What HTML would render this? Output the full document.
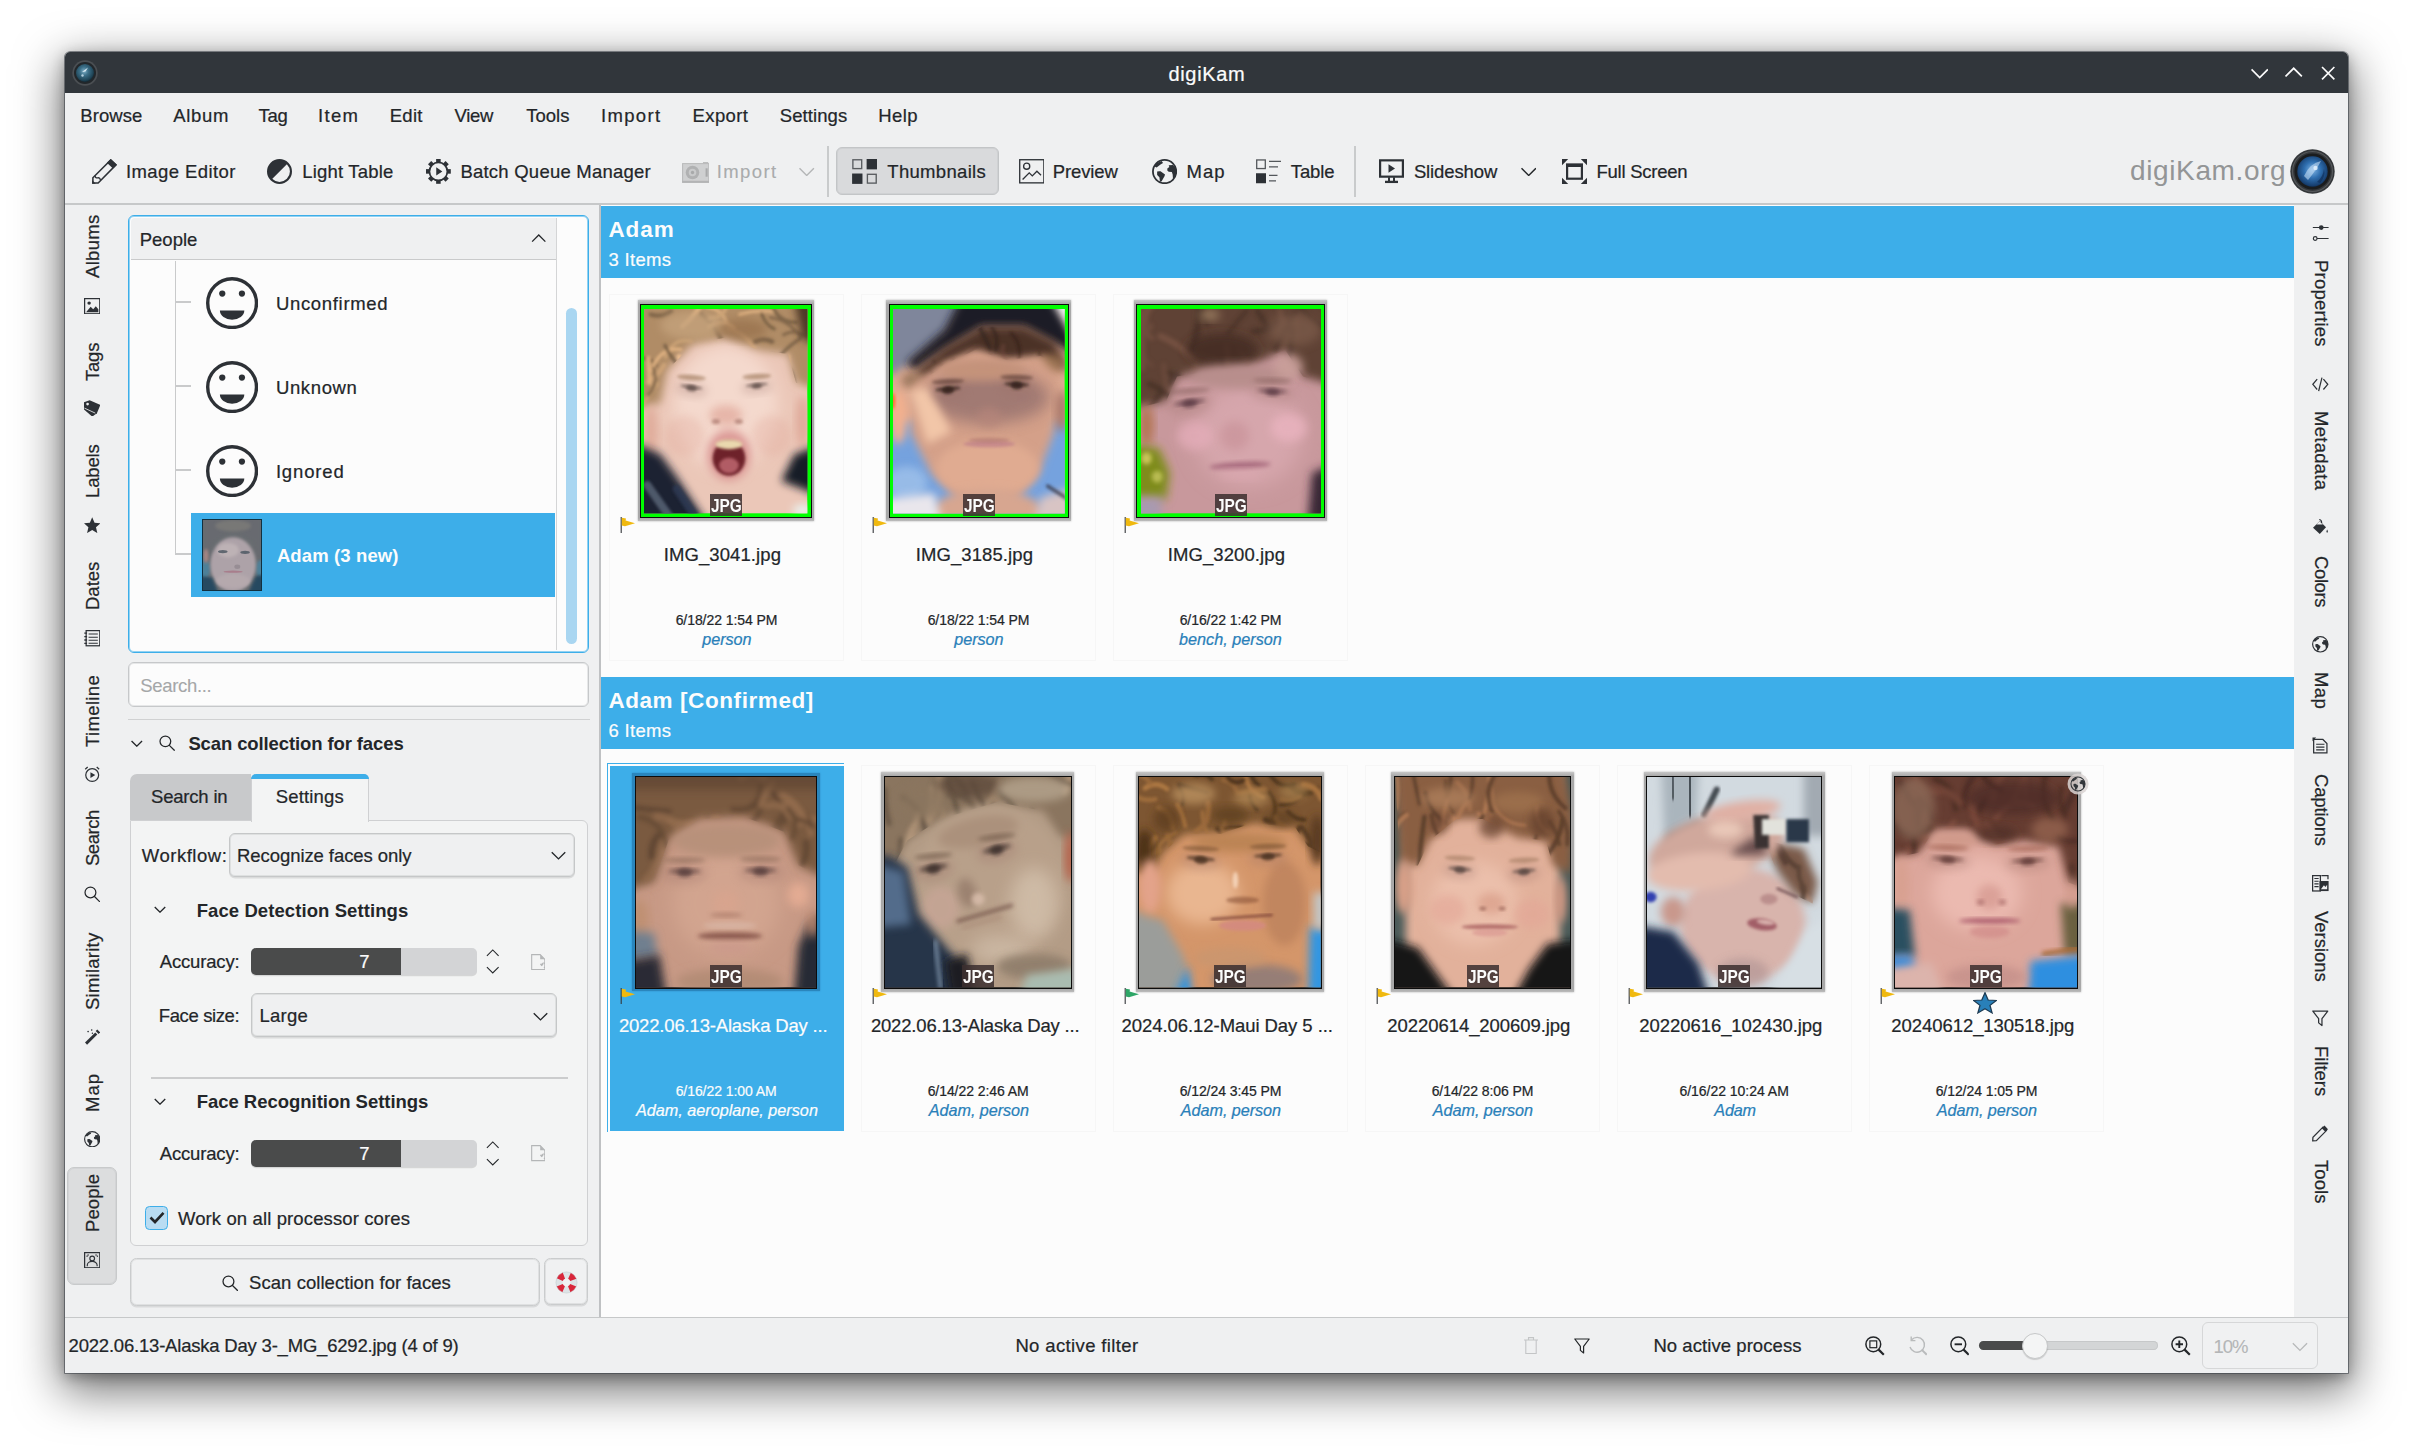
<!DOCTYPE html>
<html lang="en"><head><meta charset="utf-8"><title>digiKam</title>
<style>
html,body{margin:0;padding:0;}
body{width:2413px;height:1450px;background:#fff;position:relative;overflow:hidden;font-family:"Liberation Sans", "DejaVu Sans", sans-serif;color:#232629;}
div,svg,span{position:absolute;}
.g{left:0;top:0;width:0;height:0;}
#shadow{left:65px;top:52px;width:2283px;height:1321px;border-radius:5px 5px 0 0;box-shadow:0 0 0 0.8px rgba(60,66,72,.75), 0 14px 46px 4px rgba(0,0,0,.55), 0 4px 14px rgba(0,0,0,.30);}
.t{white-space:pre;line-height:1;display:block;-webkit-text-stroke:0.22px currentColor;}
.r{left:0;top:0;width:0;height:0;transform-origin:0 0;}
</style></head>
<body>
<div id="shadow"></div>
<div class="g" id="window">
<div class="win" style="left:65.00px;top:52.00px;width:2283.00px;height:1321.00px;background:#eff0f1;border-radius:5px 5px 0 0;"></div>
<div class="g" id="titlebar">
<div style="left:65.00px;top:52.00px;width:2283.00px;height:41.00px;background:#31363b;border-radius:5px 5px 0 0;"></div>
<svg style="left:72.00px;top:59.50px;" width="26" height="26" viewBox="0 0 26 26"><defs><radialGradient id="lens" cx=".45" cy=".4" r=".6"><stop offset="0" stop-color="#7fb0c8"/><stop offset=".4" stop-color="#3b6f88"/><stop offset=".85" stop-color="#1f4456"/><stop offset="1" stop-color="#122a36"/></radialGradient></defs><circle cx="13" cy="13" r="12.7" fill="#4b4f53"/><circle cx="13" cy="13" r="11" fill="#22272b"/><circle cx="13" cy="13" r="9" fill="url(#lens)"/><path d="M10 12 L16 7.5 L13.5 11.5 Z" fill="#e8f4fb" opacity=".9"/><circle cx="10.5" cy="15.5" r="1.2" fill="#cfe6f2" opacity=".8"/></svg>
<span class="t" style="left:1168.40px;top:64.00px;font-size:20px;color:#fcfcfc;letter-spacing:0.684px;">digiKam</span>
<svg style="left:2251.00px;top:68.30px;" width="17.4" height="10.9" viewBox="0 0 16 10"><path d="M0.5 1.3 L8 8.8 L15.5 1.3" fill="none" stroke="#fcfcfc" stroke-width="1.55"/></svg>
<svg style="left:2285.20px;top:67.00px;" width="17.4" height="10.9" viewBox="0 0 16 10"><path d="M0.5 8.7 L8 1.2 L15.5 8.7" fill="none" stroke="#fcfcfc" stroke-width="1.55"/></svg>
<svg style="left:2320.90px;top:65.90px;" width="14.4" height="14.4" viewBox="0 0 14 14"><path d="M1 1 L13 13 M13 1 L1 13" stroke="#fcfcfc" stroke-width="1.6"/></svg>
</div>
<div class="g" id="menubar">
<span class="t" style="left:80.20px;top:107.00px;font-size:18.5px;color:#232629;letter-spacing:0.100px;">Browse</span>
<span class="t" style="left:173.20px;top:107.00px;font-size:18.5px;color:#232629;letter-spacing:0.668px;">Album</span>
<span class="t" style="left:258.40px;top:107.00px;font-size:18.5px;color:#232629;letter-spacing:-0.219px;">Tag</span>
<span class="t" style="left:318.10px;top:107.00px;font-size:18.5px;color:#232629;letter-spacing:1.310px;">Item</span>
<span class="t" style="left:389.70px;top:107.00px;font-size:18.5px;color:#232629;letter-spacing:0.287px;">Edit</span>
<span class="t" style="left:454.60px;top:107.00px;font-size:18.5px;color:#232629;letter-spacing:-0.368px;">View</span>
<span class="t" style="left:526.20px;top:107.00px;font-size:18.5px;color:#232629;letter-spacing:0.016px;">Tools</span>
<span class="t" style="left:601.00px;top:107.00px;font-size:18.5px;color:#232629;letter-spacing:1.342px;">Import</span>
<span class="t" style="left:692.60px;top:107.00px;font-size:18.5px;color:#232629;letter-spacing:0.374px;">Export</span>
<span class="t" style="left:779.80px;top:107.00px;font-size:18.5px;color:#232629;letter-spacing:0.086px;">Settings</span>
<span class="t" style="left:878.30px;top:107.00px;font-size:18.5px;color:#232629;letter-spacing:0.414px;">Help</span>
</div>
<div class="g" id="toolbar">
<svg style="left:91.90px;top:159.20px;" width="25" height="24.8" viewBox="0 0 25 25"><path d="M0.8 24.2 L0.8 18.9 L18.8 0.95 L24.1 5.9 L6.1 24.2 Z" fill="none" stroke="#2d3136" stroke-width="1.55" stroke-linejoin="miter"/><path d="M14.9 3.8 L18.8 0 L25 5.8 L21 9.7 Z" fill="#2d3136"/><path d="M0 25 L0.2 21.3 L3.7 25 Z" fill="#2d3136"/><path d="M3 16.8 Q3 19.3 5.6 19 Q8.1 18.6 8.3 21.2" fill="none" stroke="#2d3136" stroke-width="1.4"/></svg>
<span class="t" style="left:125.90px;top:163.00px;font-size:18.5px;color:#232629;letter-spacing:0.425px;">Image Editor</span>
<svg style="left:267.00px;top:159.00px;" width="25" height="25" viewBox="0 0 24 24"><circle cx="12" cy="12" r="11" fill="none" stroke="#2d3136" stroke-width="2"/><path d="M4.2 19.8 A11 11 0 0 1 19.8 4.2 Z" fill="#2d3136"/></svg>
<span class="t" style="left:302.30px;top:163.00px;font-size:18.5px;color:#232629;letter-spacing:0.191px;">Light Table</span>
<svg style="left:426.05px;top:159.05px;" width="24.8" height="24.8" viewBox="0 0 24 24"><rect x="9.8" y="0" width="4.4" height="3.4" fill="#2d3136" transform="rotate(0 12 12)"/><rect x="9.8" y="0" width="4.4" height="3.4" fill="#2d3136" transform="rotate(45 12 12)"/><rect x="9.8" y="0" width="4.4" height="3.4" fill="#2d3136" transform="rotate(90 12 12)"/><rect x="9.8" y="0" width="4.4" height="3.4" fill="#2d3136" transform="rotate(135 12 12)"/><rect x="9.8" y="0" width="4.4" height="3.4" fill="#2d3136" transform="rotate(180 12 12)"/><rect x="9.8" y="0" width="4.4" height="3.4" fill="#2d3136" transform="rotate(225 12 12)"/><rect x="9.8" y="0" width="4.4" height="3.4" fill="#2d3136" transform="rotate(270 12 12)"/><rect x="9.8" y="0" width="4.4" height="3.4" fill="#2d3136" transform="rotate(315 12 12)"/><circle cx="12" cy="12" r="8.7" fill="none" stroke="#2d3136" stroke-width="1.7"/><path d="M9.9 8.1 L15.8 12 L9.9 15.9 Z" fill="#2d3136"/></svg>
<span class="t" style="left:460.40px;top:163.00px;font-size:18.5px;color:#232629;letter-spacing:0.234px;">Batch Queue Manager</span>
<svg style="left:681.70px;top:161.00px;" width="27.3" height="23" viewBox="0 0 26 22"><rect x="0.5" y="2.5" width="25" height="17" fill="#cfd0d1" stroke="#b9babb" stroke-width="1"/><rect x="0" y="19" width="26" height="2" fill="#b3b4b5"/><circle cx="10" cy="11" r="6.5" fill="#b0b1b2"/><circle cx="10" cy="11" r="3.6" fill="#c9cacb"/><circle cx="10" cy="11" r="1.6" fill="#a8a9aa"/><rect x="22.5" y="7" width="2" height="8" fill="#a9aaab"/><rect x="20" y="1" width="5" height="1.5" fill="#b9babb"/></svg>
<span class="t" style="left:716.70px;top:163.00px;font-size:18.5px;color:#a9abac;letter-spacing:1.402px;-webkit-text-stroke-width:0.1px;">Import</span>
<svg style="left:799.40px;top:166.90px;" width="15.4" height="9.6" viewBox="0 0 16 10"><path d="M0.5 1.3 L8 8.8 L15.5 1.3" fill="none" stroke="#b4b6b7" stroke-width="1.5"/></svg>
<div style="left:827.40px;top:146.20px;width:1.50px;height:50.50px;background:#c9cbcc;"></div>
<div style="left:836.30px;top:146.90px;width:162.80px;height:47.80px;background:#d9dadc;border:1.5px solid #c3c5c7;border-radius:6px;box-sizing:border-box;box-shadow:inset 0 0 0 1px rgba(195,197,199,.45);"></div>
<svg style="left:851.80px;top:159.10px;" width="25.1" height="24.9" viewBox="0 0 24 24"><rect x="0.75" y="0.75" width="8.5" height="8.5" fill="none" stroke="#2d3136" stroke-width="1.3" opacity=".75"/><rect x="14" y="0" width="10" height="10" fill="#2d3136"/><rect x="0" y="14" width="10" height="10" fill="#2d3136"/><rect x="14.75" y="14.75" width="8.5" height="8.5" fill="none" stroke="#2d3136" stroke-width="1.3" opacity=".75"/></svg>
<span class="t" style="left:887.30px;top:163.00px;font-size:18.5px;color:#232629;letter-spacing:0.314px;">Thumbnails</span>
<svg style="left:1018.50px;top:159.30px;" width="25.6" height="24.6" viewBox="0 0 25 24"><rect x="0.7" y="0.7" width="23.6" height="22.6" fill="none" stroke="#2d3136" stroke-width="1.3"/><circle cx="7.5" cy="7" r="3" fill="none" stroke="#2d3136" stroke-width="1.3"/><path d="M3.5 20 L10 13.5 L13 16.5 L17.5 12 L21.5 15.8" fill="none" stroke="#2d3136" stroke-width="1.3"/></svg>
<span class="t" style="left:1052.80px;top:163.00px;font-size:18.5px;color:#232629;letter-spacing:-0.123px;">Preview</span>
<svg style="left:1152.00px;top:159.00px;" width="25.2" height="25.2" viewBox="0 0 24 24"><circle cx="12" cy="12" r="11.1" fill="none" stroke="#2d3136" stroke-width="1.7"/><path d="M1.9 6.6 L4.6 3.9 L9.2 2 L10.5 3.9 L8.1 5.2 L4.4 8.2 L2.5 7.1 Z" fill="#2d3136"/><path d="M4.9 12 Q6.5 11.3 8.1 11.7 L12.4 14.7 L11.9 16.5 L9.2 21.1 L7.6 21.6 L7.05 17.4 L4.9 15.2 Z" fill="#2d3136"/><path d="M15.9 6.05 L20 5.8 L21.6 7.7 L23 8.2 Q23.6 12 22.5 16 L20 19.2 L19.7 14.7 L18.9 12.5 L15.9 12.2 L14.6 10.9 L14.6 9 L16.5 7.7 Z" fill="#2d3136"/></svg>
<span class="t" style="left:1186.60px;top:163.00px;font-size:18.5px;color:#232629;letter-spacing:0.950px;">Map</span>
<svg style="left:1256.00px;top:159.30px;" width="25" height="24.5" viewBox="0 0 25 24"><rect x="0.7" y="0.7" width="8.6" height="8.6" fill="none" stroke="#2d3136" stroke-width="1.3" opacity=".8"/><rect x="0" y="14" width="10" height="10" fill="#2d3136"/><path d="M13 2.2 H25 M13 7.7 H22 M13 16.2 H21.5 M13 21.7 H20" stroke="#2d3136" stroke-width="1.3" opacity=".8"/></svg>
<span class="t" style="left:1290.80px;top:163.00px;font-size:18.5px;color:#232629;letter-spacing:-0.109px;">Table</span>
<div style="left:1354.20px;top:146.20px;width:1.50px;height:50.50px;background:#c9cbcc;"></div>
<svg style="left:1379.00px;top:159.30px;" width="25" height="24.5" viewBox="0 0 25 24"><rect x="1.1" y="1.1" width="22.8" height="16.3" fill="none" stroke="#2d3136" stroke-width="2.2"/><path d="M9.5 5 L16 9.2 L9.5 13.5 Z" fill="#2d3136"/><path d="M10 18 V22 M15 18 V22" stroke="#2d3136" stroke-width="2"/><rect x="6" y="21.5" width="13" height="2.3" fill="#2d3136"/></svg>
<span class="t" style="left:1413.90px;top:163.00px;font-size:18.5px;color:#232629;letter-spacing:-0.121px;">Slideshow</span>
<svg style="left:1520.90px;top:166.90px;" width="15.4" height="9.6" viewBox="0 0 16 10"><path d="M0.5 1.3 L8 8.8 L15.5 1.3" fill="none" stroke="#232629" stroke-width="1.5"/></svg>
<svg style="left:1562.00px;top:159.00px;" width="25" height="25" viewBox="0 0 25 25"><path d="M0 0 H6.2 L0 6.2 Z M25 0 V6.2 L18.8 0 Z M0 25 V18.8 L6.2 25 Z M25 25 H18.8 L25 18.8 Z" fill="#2d3136"/><rect x="5.1" y="5.7" width="14.8" height="14" fill="none" stroke="#2d3136" stroke-width="2.2"/><rect x="4" y="4.6" width="17" height="3.4" fill="#2d3136"/></svg>
<span class="t" style="left:1596.40px;top:163.00px;font-size:18.5px;color:#232629;letter-spacing:-0.238px;">Full Screen</span>
<span class="t" style="left:2130.10px;top:157.00px;font-size:28px;color:#939596;letter-spacing:0.607px;-webkit-text-stroke-width:0px;">digiKam.org</span>
<svg style="left:2290.00px;top:148.80px;" width="45" height="45" viewBox="0 0 45 45"><defs><radialGradient id="lens2" cx=".5" cy=".45" r=".6"><stop offset="0" stop-color="#7fb4e4"/><stop offset=".45" stop-color="#2f6fb0"/><stop offset=".85" stop-color="#173f70"/><stop offset="1" stop-color="#0c2444"/></radialGradient></defs><circle cx="22.5" cy="22.5" r="22.2" fill="#34373a"/><circle cx="22.5" cy="22.5" r="20" fill="none" stroke="#55585b" stroke-width="1.2"/><circle cx="22.5" cy="22.5" r="18" fill="#1a1c1e"/><circle cx="22.5" cy="22.5" r="15.2" fill="url(#lens2)"/><path d="M14 27 Q20 14 31 12 Q27 20 18 31 Z" fill="#cfe6fa" opacity=".55"/><circle cx="25.5" cy="19" r="2.2" fill="#eaf5ff" opacity=".8"/><path d="M27 33 Q33 28 34 20 Q36 27 30 34 Z" fill="#0c2a55" opacity=".6"/></svg>
<div style="left:65.00px;top:202.80px;width:2283.00px;height:2.40px;background:#c6c8c9;"></div>
</div>
<div class="g" id="leftbar">
<div style="left:67.40px;top:1167.40px;width:49.60px;height:117.20px;background:#dcddde;border:1.5px solid #c8cacb;border-radius:7px;box-sizing:border-box;box-shadow:inset 0 0 0 1px rgba(200,202,203,.45);"></div>
<div class="r" style="left:99.70px;top:278.40px;transform:rotate(-90deg);"><span class="t" style="left:0.00px;top:-15.66px;font-size:18.5px;color:#232629;letter-spacing:0.312px;">Albums</span></div>
<svg style="left:84.00px;top:298.00px;" width="16.4" height="16.4" viewBox="0 0 16 16"><rect x="0.6" y="0.6" width="14.8" height="14.8" fill="none" stroke="#2d3136" stroke-width="1.2"/><circle cx="5" cy="5" r="1.7" fill="#2d3136"/><path d="M2 14 L6.5 8.5 L9 11 L11.5 8 L14 11 V14 Z" fill="#2d3136"/></svg>
<div class="r" style="left:99.70px;top:381.20px;transform:rotate(-90deg);"><span class="t" style="left:0.00px;top:-15.66px;font-size:18.5px;color:#232629;letter-spacing:-0.209px;">Tags</span></div>
<svg style="left:84.00px;top:400.00px;" width="16.4" height="16.4" viewBox="0 0 16 16"><path d="M0 2.3 L5.5 0.2 L16 4.8 L12.6 13 L8 16.2 L0 9.3 Z" fill="#2d3136"/><path d="M0.4 7.9 L11 12.8" stroke="#eff0f1" stroke-width="0.8"/><circle cx="3.5" cy="4" r="1.3" fill="#eff0f1"/></svg>
<div class="r" style="left:99.70px;top:496.60px;transform:rotate(-90deg);"><span class="t" style="left:-1.00px;top:-15.66px;font-size:18.5px;color:#232629;letter-spacing:-0.133px;">Labels</span></div>
<svg style="left:84.00px;top:517.00px;" width="16.4" height="16.4" viewBox="0 0 16 16"><path d="M8 0.3 L10.3 5.7 L16 6.2 L11.7 10 L13 15.7 L8 12.7 L3 15.7 L4.3 10 L0 6.2 L5.7 5.7 Z" fill="#2d3136"/></svg>
<div class="r" style="left:99.70px;top:609.40px;transform:rotate(-90deg);"><span class="t" style="left:-1.00px;top:-15.66px;font-size:18.5px;color:#232629;letter-spacing:0.006px;">Dates</span></div>
<svg style="left:84.00px;top:630.30px;" width="16.4" height="16.4" viewBox="0 0 16 16"><rect x="2.1" y="0.6" width="13.3" height="14.8" fill="none" stroke="#2d3136" stroke-width="1.2"/><path d="M4.5 4 H13.5 M4.5 7 H13.5 M4.5 10 H13.5 M4.5 13 H13.5" stroke="#2d3136" stroke-width="1"/><path d="M0.3 3 H3 M0.3 6.4 H3 M0.3 9.8 H3 M0.3 13 H3" stroke="#2d3136" stroke-width="1.3"/></svg>
<div class="r" style="left:99.70px;top:746.50px;transform:rotate(-90deg);"><span class="t" style="left:0.00px;top:-15.66px;font-size:18.5px;color:#232629;letter-spacing:0.367px;">Timeline</span></div>
<svg style="left:84.00px;top:766.20px;" width="16.4" height="16.4" viewBox="0 0 16 16"><circle cx="8" cy="8.8" r="6.3" fill="none" stroke="#2d3136" stroke-width="1.2"/><path d="M6.3 6 L11 8.8 L6.3 11.6 Z" fill="#2d3136"/><path d="M1.2 3.2 L3.6 1 M14.8 3.2 L12.4 1" stroke="#2d3136" stroke-width="1.2"/></svg>
<div class="r" style="left:99.70px;top:865.50px;transform:rotate(-90deg);"><span class="t" style="left:0.00px;top:-15.66px;font-size:18.5px;color:#232629;letter-spacing:-0.466px;">Search</span></div>
<svg style="left:84.00px;top:886.00px;" width="16.4" height="16.4" viewBox="0 0 16 16"><circle cx="6.3" cy="6.3" r="5.3" fill="none" stroke="#232629" stroke-width="1.2"/><path d="M10 10 L15.5 15.5" stroke="#232629" stroke-width="1.2"/></svg>
<div class="r" style="left:99.70px;top:1010.40px;transform:rotate(-90deg);"><span class="t" style="left:0.00px;top:-15.66px;font-size:18.5px;color:#232629;letter-spacing:0.247px;">Similarity</span></div>
<svg style="left:84.00px;top:1029.30px;" width="16.4" height="16.4" viewBox="0 0 16 16"><path d="M1 14.5 L11 4.5 L13 6.5 L3 16.5 Z" fill="#2d3136" transform="translate(0,-1.2)"/><path d="M12.2 1.2 L15 4" stroke="#2d3136" stroke-width="2.2"/><circle cx="4" cy="2.5" r="0.8" fill="#2d3136"/><circle cx="7.5" cy="1" r="0.8" fill="#2d3136"/><circle cx="8.2" cy="4.2" r="0.7" fill="#2d3136"/></svg>
<div class="r" style="left:99.70px;top:1110.80px;transform:rotate(-90deg);"><span class="t" style="left:-1.00px;top:-15.66px;font-size:18.5px;color:#232629;letter-spacing:1.050px;">Map</span></div>
<svg style="left:84.00px;top:1131.00px;" width="16.4" height="16.4" viewBox="0 0 24 24"><circle cx="12" cy="12" r="11.1" fill="none" stroke="#2d3136" stroke-width="1.7"/><path d="M1.9 6.6 L4.6 3.9 L9.2 2 L10.5 3.9 L8.1 5.2 L4.4 8.2 L2.5 7.1 Z" fill="#2d3136"/><path d="M4.9 12 Q6.5 11.3 8.1 11.7 L12.4 14.7 L11.9 16.5 L9.2 21.1 L7.6 21.6 L7.05 17.4 L4.9 15.2 Z" fill="#2d3136"/><path d="M15.9 6.05 L20 5.8 L21.6 7.7 L23 8.2 Q23.6 12 22.5 16 L20 19.2 L19.7 14.7 L18.9 12.5 L15.9 12.2 L14.6 10.9 L14.6 9 L16.5 7.7 Z" fill="#2d3136"/></svg>
<div class="r" style="left:99.70px;top:1231.30px;transform:rotate(-90deg);"><span class="t" style="left:-1.00px;top:-15.66px;font-size:18.5px;color:#232629;letter-spacing:0.097px;">People</span></div>
<svg style="left:84.00px;top:1252.00px;" width="16.4" height="16.4" viewBox="0 0 16 16"><rect x="0.6" y="0.6" width="14.8" height="14.8" fill="none" stroke="#2d3136" stroke-width="1.2"/><circle cx="8" cy="6.3" r="2.3" fill="none" stroke="#2d3136" stroke-width="1.1"/><path d="M3.2 14 V12.8 A4.8 3.6 0 0 1 12.8 12.8 V14" fill="none" stroke="#2d3136" stroke-width="1.1"/><path d="M3 5 V3 H5 M11 3 H13 V5" fill="none" stroke="#2d3136" stroke-width="1" stroke-dasharray="1.5 0.8"/></svg>
</div>
<div class="g" id="leftpanel">
<div style="left:128.30px;top:214.70px;width:461.20px;height:437.90px;background:#fcfcfc;border:1.6px solid #3daee9;border-radius:6px;box-sizing:border-box;box-shadow:inset 0 0 0 1px rgba(61,174,233,.55);"></div>
<div style="left:131.00px;top:217.60px;width:425.60px;height:41.60px;background:#eff0f1;border-bottom:1.5px solid #c9cacb;border-top-left-radius:4px;box-sizing:content-box;"></div>
<div style="left:556.20px;top:217.60px;width:1.30px;height:432.30px;background:#d4d5d6;"></div>
<span class="t" style="left:139.70px;top:231.00px;font-size:18.5px;color:#232629;letter-spacing:0.017px;">People</span>
<svg style="left:531.30px;top:234.00px;" width="15.5" height="8.8" viewBox="0 0 16 10"><path d="M0.5 8.7 L8 1.2 L15.5 8.7" fill="none" stroke="#232629" stroke-width="1.5"/></svg>
<div style="left:174.70px;top:261.00px;width:1.30px;height:293.50px;background:#c9cacb;"></div>
<div style="left:175.00px;top:301.40px;width:16.00px;height:1.30px;background:#c9cacb;"></div>
<div style="left:175.00px;top:385.40px;width:16.00px;height:1.30px;background:#c9cacb;"></div>
<div style="left:175.00px;top:469.40px;width:16.00px;height:1.30px;background:#c9cacb;"></div>
<div style="left:175.00px;top:553.40px;width:16.40px;height:1.30px;background:#c9cacb;"></div>
<svg style="left:206.00px;top:277.00px;" width="52.2" height="52.2" viewBox="0 0 52 52"><circle cx="26" cy="26" r="24.3" fill="none" stroke="#2d3136" stroke-width="3.4"/><circle cx="16.2" cy="16.5" r="3.1" fill="#2d3136"/><circle cx="35.8" cy="16.5" r="3.1" fill="#2d3136"/><path d="M13.8 33.5 H38.2 A12.2 9 0 0 1 13.8 33.5 Z" fill="#2d3136"/></svg>
<span class="t" style="left:275.90px;top:295.00px;font-size:18.5px;color:#232629;letter-spacing:0.681px;">Unconfirmed</span>
<svg style="left:206.00px;top:361.00px;" width="52.2" height="52.2" viewBox="0 0 52 52"><circle cx="26" cy="26" r="24.3" fill="none" stroke="#2d3136" stroke-width="3.4"/><circle cx="16.2" cy="16.5" r="3.1" fill="#2d3136"/><circle cx="35.8" cy="16.5" r="3.1" fill="#2d3136"/><path d="M13.8 33.5 H38.2 A12.2 9 0 0 1 13.8 33.5 Z" fill="#2d3136"/></svg>
<span class="t" style="left:275.90px;top:379.00px;font-size:18.5px;color:#232629;letter-spacing:0.644px;">Unknown</span>
<svg style="left:206.00px;top:445.00px;" width="52.2" height="52.2" viewBox="0 0 52 52"><circle cx="26" cy="26" r="24.3" fill="none" stroke="#2d3136" stroke-width="3.4"/><circle cx="16.2" cy="16.5" r="3.1" fill="#2d3136"/><circle cx="35.8" cy="16.5" r="3.1" fill="#2d3136"/><path d="M13.8 33.5 H38.2 A12.2 9 0 0 1 13.8 33.5 Z" fill="#2d3136"/></svg>
<span class="t" style="left:275.90px;top:463.00px;font-size:18.5px;color:#232629;letter-spacing:0.841px;">Ignored</span>
<div style="left:191.10px;top:512.90px;width:364.00px;height:84.00px;background:#3daee9;"></div>
<div style="left:202.00px;top:519.00px;width:60.10px;height:71.90px;border:1.8px solid #12303f;box-sizing:border-box;overflow:hidden;background:#31546a;"><svg width="60.1" height="71.8" viewBox="0 0 60.1 71.8" style="left:0;top:0"><defs><filter id="fb1" x="-30%" y="-30%" width="160%" height="160%"><feGaussianBlur stdDeviation="1.6"/></filter><filter id="fs1" x="-30%" y="-30%" width="160%" height="160%"><feGaussianBlur stdDeviation="0.7"/></filter><filter id="fx1" x="-40%" y="-40%" width="180%" height="180%"><feGaussianBlur stdDeviation="3.0"/></filter><clipPath id="fc1"><rect width="60.1" height="71.8"/></clipPath></defs><g clip-path="url(#fc1)"><rect width="60.1" height="71.8" fill="#686c70"/><ellipse cx="1.2" cy="48.8" rx="6.0" ry="10.1" fill="#4e8098" filter="url(#fb1)"/><ellipse cx="58.9" cy="48.8" rx="6.0" ry="10.1" fill="#4e8098" filter="url(#fb1)"/><polygon points="1.2,-7.2 58.9,-7.2 58.9,39.5 52.9,39.5 50.5,21.5 36.1,14.4 27.0,12.2 18.0,17.9 9.6,23.7 8.4,39.5 1.2,43.1" fill="#676b70" filter="url(#fb1)"/><ellipse cx="30.1" cy="5.7" rx="18.0" ry="5.7" fill="#7d7c78" opacity="0.8" filter="url(#fb1)"/><ellipse cx="30.1" cy="44.5" rx="22.8" ry="27.3" fill="#ada2a8" filter="url(#fb1)"/><ellipse cx="25.2" cy="30.2" rx="10.8" ry="7.2" fill="#bdb2b5" filter="url(#fb1)"/><ellipse cx="30.1" cy="61.0" rx="16.8" ry="7.2" fill="#b5a9ad" filter="url(#fb1)"/><polygon points="-6.0,56.0 9.0,57.4 18.0,79.0 -6.0,79.0" fill="#284a60" filter="url(#fb1)"/><polygon points="66.1,53.8 52.9,56.0 42.1,79.0 66.1,79.0" fill="#284a60" filter="url(#fb1)"/><ellipse cx="3.0" cy="35.9" rx="2.4" ry="7.2" fill="#b08a88" opacity="0.9" filter="url(#fb1)"/><ellipse cx="19.8" cy="31.6" rx="4.8" ry="1.6" fill="#4a5560" opacity="0.8" filter="url(#fs1)"/><ellipse cx="42.1" cy="32.3" rx="4.8" ry="1.6" fill="#4a5560" opacity="0.8" filter="url(#fs1)"/><ellipse cx="34.3" cy="46.7" rx="3.0" ry="2.2" fill="#8a8088" opacity="0.6" filter="url(#fs1)"/><ellipse cx="30.1" cy="51.7" rx="9.6" ry="1.1" fill="#a87888" opacity="0.85" filter="url(#fs1)"/></g></svg></div>
<span class="t" style="left:276.90px;top:547.00px;font-size:18.5px;color:#fcfcfc;letter-spacing:0.118px;font-weight:bold;-webkit-text-stroke-width:0;">Adam (3 new)</span>
<div style="left:566.10px;top:307.60px;width:11.40px;height:336.40px;background:#a9d6f1;border-radius:6px;"></div>
<div style="left:128.30px;top:662.40px;width:461.20px;height:45.00px;background:#fcfcfc;border:1.5px solid #c6c8ca;border-radius:6px;box-sizing:border-box;box-shadow:inset 0 0 0 1px rgba(198,200,202,.4);"></div>
<span class="t" style="left:140.30px;top:677.00px;font-size:18.5px;color:#a5a7a8;letter-spacing:-0.325px;-webkit-text-stroke-width:0.1px;">Search...</span>
<div style="left:128.00px;top:718.80px;width:462.00px;height:1.40px;background:#d0d1d2;"></div>
<svg style="left:131.40px;top:739.50px;" width="11.6" height="7" viewBox="0 0 16 10"><path d="M0.5 1.3 L8 8.8 L15.5 1.3" fill="none" stroke="#232629" stroke-width="1.9"/></svg>
<svg style="left:159.00px;top:735.00px;" width="16.2" height="16.2" viewBox="0 0 16 16"><circle cx="6.3" cy="6.3" r="5.3" fill="none" stroke="#232629" stroke-width="1.25"/><path d="M10 10 L15.5 15.5" stroke="#232629" stroke-width="1.25"/></svg>
<span class="t" style="left:188.40px;top:735.00px;font-size:18.5px;color:#232629;letter-spacing:-0.111px;font-weight:bold;-webkit-text-stroke-width:0;">Scan collection for faces</span>
<div style="left:130.00px;top:774.30px;width:120.80px;height:46.20px;background:#c8c9cb;border-top-left-radius:7px;"></div>
<div style="left:130.00px;top:820.00px;width:457.80px;height:426.10px;background:#f3f4f4;border:1.4px solid #cfd0d2;border-radius:0 6px 6px 6px;box-sizing:border-box;"></div>
<div style="left:250.50px;top:774.00px;width:118.40px;height:48.00px;background:#f3f4f4;border:1.4px solid #cfd0d2;border-bottom:none;border-radius:6px 6px 0 0;box-sizing:border-box;"></div>
<div style="left:250.50px;top:774.00px;width:118.40px;height:4.80px;background:#3daee9;border-radius:6px 6px 0 0;"></div>
<span class="t" style="left:151.00px;top:788.00px;font-size:18.5px;color:#232629;letter-spacing:-0.196px;">Search in</span>
<span class="t" style="left:275.80px;top:788.00px;font-size:18.5px;color:#232629;letter-spacing:0.143px;">Settings</span>
<span class="t" style="left:141.80px;top:847.00px;font-size:18.5px;color:#232629;letter-spacing:0.522px;">Workflow:</span>
<div style="left:228.80px;top:832.80px;width:346.00px;height:44.70px;background:#eff0f1;border:1.5px solid #c5c7c8;border-radius:6px;box-sizing:border-box;box-shadow:0 1.5px 0 rgba(0,0,0,.10), inset 0 0 0 1px rgba(197,199,200,.4);"></div>
<span class="t" style="left:237.10px;top:847.00px;font-size:18.5px;color:#232629;letter-spacing:-0.079px;">Recognize faces only</span>
<svg style="left:551.00px;top:851.40px;" width="15" height="9" viewBox="0 0 16 10"><path d="M0.5 1.3 L8 8.8 L15.5 1.3" fill="none" stroke="#232629" stroke-width="1.5"/></svg>
<svg style="left:153.60px;top:905.90px;" width="12" height="7" viewBox="0 0 16 10"><path d="M0.5 1.3 L8 8.8 L15.5 1.3" fill="none" stroke="#232629" stroke-width="1.9"/></svg>
<span class="t" style="left:196.70px;top:902.00px;font-size:18.5px;color:#232629;letter-spacing:0.085px;font-weight:bold;-webkit-text-stroke-width:0;">Face Detection Settings</span>
<span class="t" style="left:159.80px;top:953.00px;font-size:18.5px;color:#232629;letter-spacing:-0.172px;">Accuracy:</span>
<div style="left:251.20px;top:948.00px;width:225.60px;height:26.90px;background:#d3d4d6;border-radius:5px;box-shadow:0 1.2px 0 rgba(0,0,0,.12);overflow:hidden;"><div style="left:0;top:0;width:149.6px;height:26.9px;background:#4a4b4b;"></div></div>
<span class="t" style="left:359.30px;top:953.00px;font-size:18.5px;color:#fcfcfc;">7</span>
<svg style="left:484.70px;top:949.00px;" width="15.5" height="7.8" viewBox="0 0 16 10"><path d="M0.5 8.7 L8 1.2 L15.5 8.7" fill="none" stroke="#232629" stroke-width="1.4"/></svg>
<svg style="left:484.70px;top:966.10px;" width="15.5" height="7.8" viewBox="0 0 16 10"><path d="M0.5 1.3 L8 8.8 L15.5 1.3" fill="none" stroke="#232629" stroke-width="1.4"/></svg>
<svg style="left:530.90px;top:953.60px;" width="14.5" height="16.2" viewBox="0 0 14.2 16"><path d="M0.6 0.6 H9 L13.6 5.2 V15.4 H0.6 Z" fill="none" stroke="#b4b6b7" stroke-width="1.1"/><path d="M9 0.6 V5.2 H13.6 Z" fill="#b4b6b7"/><path d="M12.6 13.4 A2.2 2.2 0 1 0 10.4 11.2 M9.2 9.8 L10.4 11.4 L12 10.2" fill="none" stroke="#b4b6b7" stroke-width="1"/></svg>
<span class="t" style="left:158.80px;top:1007.00px;font-size:18.5px;color:#232629;letter-spacing:-0.385px;">Face size:</span>
<div style="left:251.20px;top:993.30px;width:305.40px;height:44.20px;background:#eff0f1;border:1.5px solid #c5c7c8;border-radius:6px;box-sizing:border-box;box-shadow:0 1.5px 0 rgba(0,0,0,.10), inset 0 0 0 1px rgba(197,199,200,.4);"></div>
<span class="t" style="left:259.50px;top:1007.00px;font-size:18.5px;color:#232629;letter-spacing:0.243px;">Large</span>
<svg style="left:532.80px;top:1012.00px;" width="15" height="9" viewBox="0 0 16 10"><path d="M0.5 1.3 L8 8.8 L15.5 1.3" fill="none" stroke="#232629" stroke-width="1.5"/></svg>
<div style="left:151.10px;top:1077.20px;width:417.00px;height:1.50px;background:#cbcccd;"></div>
<svg style="left:153.60px;top:1097.60px;" width="12" height="7" viewBox="0 0 16 10"><path d="M0.5 1.3 L8 8.8 L15.5 1.3" fill="none" stroke="#232629" stroke-width="1.9"/></svg>
<span class="t" style="left:196.70px;top:1093.00px;font-size:18.5px;color:#232629;letter-spacing:-0.026px;font-weight:bold;-webkit-text-stroke-width:0;">Face Recognition Settings</span>
<span class="t" style="left:159.80px;top:1145.00px;font-size:18.5px;color:#232629;letter-spacing:-0.172px;">Accuracy:</span>
<div style="left:251.20px;top:1139.80px;width:225.60px;height:26.90px;background:#d3d4d6;border-radius:5px;box-shadow:0 1.2px 0 rgba(0,0,0,.12);overflow:hidden;"><div style="left:0;top:0;width:149.6px;height:26.9px;background:#4a4b4b;"></div></div>
<span class="t" style="left:359.30px;top:1145.00px;font-size:18.5px;color:#fcfcfc;">7</span>
<svg style="left:484.70px;top:1140.80px;" width="15.5" height="7.8" viewBox="0 0 16 10"><path d="M0.5 8.7 L8 1.2 L15.5 8.7" fill="none" stroke="#232629" stroke-width="1.4"/></svg>
<svg style="left:484.70px;top:1157.90px;" width="15.5" height="7.8" viewBox="0 0 16 10"><path d="M0.5 1.3 L8 8.8 L15.5 1.3" fill="none" stroke="#232629" stroke-width="1.4"/></svg>
<svg style="left:530.90px;top:1145.40px;" width="14.5" height="16.2" viewBox="0 0 14.2 16"><path d="M0.6 0.6 H9 L13.6 5.2 V15.4 H0.6 Z" fill="none" stroke="#b4b6b7" stroke-width="1.1"/><path d="M9 0.6 V5.2 H13.6 Z" fill="#b4b6b7"/><path d="M12.6 13.4 A2.2 2.2 0 1 0 10.4 11.2 M9.2 9.8 L10.4 11.4 L12 10.2" fill="none" stroke="#b4b6b7" stroke-width="1"/></svg>
<div style="left:144.70px;top:1206.30px;width:23.60px;height:23.30px;background:#b9dcf2;border:1.6px solid #3daee9;border-radius:4.5px;box-sizing:border-box;"></div>
<svg style="left:148.50px;top:1211.00px;" width="16" height="13" viewBox="0 0 16 13"><path d="M1.5 6.5 L6 11 L14.5 1.8" fill="none" stroke="#232629" stroke-width="2.6"/></svg>
<span class="t" style="left:177.90px;top:1210.00px;font-size:18.5px;color:#232629;letter-spacing:0.120px;">Work on all processor cores</span>
<div style="left:129.70px;top:1258.40px;width:410.60px;height:47.40px;background:#f0f1f2;border:1.8px solid #cacccd;border-radius:6.5px;box-sizing:border-box;box-shadow:0 1.4px 0 rgba(0,0,0,.09), inset 0 0 0 1px rgba(202,204,205,.45);"></div>
<svg style="left:221.80px;top:1274.80px;" width="16.4" height="16.4" viewBox="0 0 16 16"><circle cx="6.3" cy="6.3" r="5.3" fill="none" stroke="#232629" stroke-width="1.25"/><path d="M10 10 L15.5 15.5" stroke="#232629" stroke-width="1.25"/></svg>
<span class="t" style="left:249.10px;top:1274.00px;font-size:18.5px;color:#232629;letter-spacing:0.051px;">Scan collection for faces</span>
<div style="left:543.80px;top:1258.40px;width:44.70px;height:46.60px;background:#f0f1f2;border:1.8px solid #cacccd;border-radius:6.5px;box-sizing:border-box;box-shadow:0 1.4px 0 rgba(0,0,0,.09), inset 0 0 0 1px rgba(202,204,205,.45);"></div>
<svg style="left:554.60px;top:1270.70px;" width="23" height="23" viewBox="0 0 23 23"><circle cx="11.5" cy="11.5" r="7.3" fill="none" stroke="#dde3e6" stroke-width="6.6"/><circle cx="11.5" cy="11.5" r="7.3" fill="none" stroke="#d9263a" stroke-width="6.6" stroke-dasharray="5.733 5.733" stroke-dashoffset="8.6"/><circle cx="11.5" cy="11.5" r="10.6" fill="none" stroke="#b9c2c6" stroke-width=".6" opacity=".7"/></svg>
</div>
<div style="left:598.80px;top:205.20px;width:2.00px;height:1112.20px;background:#bfc1c3;"></div>
<div class="g" id="mainview">
<div style="left:600.80px;top:205.20px;width:1692.90px;height:1112.20px;background:#fcfcfc;"></div>
<div style="left:600.80px;top:205.80px;width:1692.90px;height:72.20px;background:#3daee9;"></div>
<span class="t" style="left:608.40px;top:219.00px;font-size:22.5px;color:#fcfcfc;letter-spacing:0.931px;font-weight:bold;-webkit-text-stroke-width:0;">Adam</span>
<span class="t" style="left:608.40px;top:251.00px;font-size:18.5px;color:#fcfcfc;letter-spacing:0.332px;">3 Items</span>
<div style="left:600.80px;top:676.80px;width:1692.90px;height:72.20px;background:#3daee9;"></div>
<span class="t" style="left:608.40px;top:690.00px;font-size:22.5px;color:#fcfcfc;letter-spacing:0.576px;font-weight:bold;-webkit-text-stroke-width:0;">Adam [Confirmed]</span>
<span class="t" style="left:608.40px;top:722.00px;font-size:18.5px;color:#fcfcfc;letter-spacing:0.332px;">6 Items</span>
<div style="left:609.00px;top:293.90px;width:235.40px;height:367.40px;border:1.2px solid #f6f6f6;box-sizing:border-box;"></div>
<div style="left:637.60px;top:300.40px;width:176.80px;height:220.70px;background:linear-gradient(#c6c6c6,#a8a8a8 4px,#a8a8a8 calc(100% - 3px),#bcbcbc);box-shadow:0 0 2px rgba(0,0,0,.3);"></div>
<div style="left:639.80px;top:303.80px;width:172.40px;height:214.50px;background:#0c0c0c;"></div>
<div style="left:640.80px;top:304.80px;width:170.40px;height:212.50px;background:#00ff00;"></div>
<div style="left:644.30px;top:309.30px;width:163.50px;height:204.60px;overflow:hidden;"><svg width="163.5" height="204.6" viewBox="0 0 163.5 204.6" style="left:0;top:0"><defs><filter id="fb2" x="-30%" y="-30%" width="160%" height="160%"><feGaussianBlur stdDeviation="4"/></filter><filter id="fs2" x="-30%" y="-30%" width="160%" height="160%"><feGaussianBlur stdDeviation="1.8"/></filter><filter id="fx2" x="-40%" y="-40%" width="180%" height="180%"><feGaussianBlur stdDeviation="7.6"/></filter><clipPath id="fc2"><rect width="163.5" height="204.6"/></clipPath></defs><g clip-path="url(#fc2)"><rect width="163.5" height="204.6" fill="#ebc7b8"/><ellipse cx="81.8" cy="98.2" rx="52.3" ry="61.4" fill="#f4d9cd" filter="url(#fx2)"/><polygon points="-16.4,-20.5 179.9,-20.5 179.9,81.8 152.1,73.7 143.9,45.0 114.5,40.9 81.8,28.6 49.1,34.8 22.9,61.4 16.4,94.1 -16.4,102.3" fill="#b08c66" filter="url(#fb2)"/><clipPath id="fh2_11"><polygon points="-16.4,-20.5 179.9,-20.5 179.9,81.8 152.1,73.7 143.9,45.0 114.5,40.9 81.8,28.6 49.1,34.8 22.9,61.4 16.4,94.1 -16.4,102.3"/></clipPath><g clip-path="url(#fh2_11)"><g filter="url(#fs2)" fill="none" stroke-linecap="round" opacity="0.75"><path d="M86.3 53.5 Q73.5 55.1 61.6 61.0" stroke="#e8b986" stroke-width="2.9"/><path d="M90.7 57.7 Q87.2 70.2 76.7 71.1" stroke="#68533c" stroke-width="4.3"/><path d="M131.3 3.0 Q113.2 0.1 95.5 5.5" stroke="#efbe8a" stroke-width="2.9"/><path d="M-7.2 51.8 Q3.8 45.0 12.1 56.3" stroke="#67523b" stroke-width="3.5"/><path d="M72.9 68.0 Q68.3 85.9 71.2 104.4" stroke="#e8b886" stroke-width="3.5"/><path d="M62.1 101.8 Q45.5 108.2 28.8 102.3" stroke="#715a41" stroke-width="3.0"/><path d="M56.2 -2.9 Q48.7 9.2 38.3 17.3" stroke="#f8c58f" stroke-width="4.6"/><path d="M124.8 -13.3 Q130.4 13.3 152.3 13.4" stroke="#6c563e" stroke-width="3.4"/><path d="M20.1 55.8 Q13.8 67.1 3.8 73.0" stroke="#d5a97b" stroke-width="4.6"/><path d="M117.6 4.3 Q121.0 15.9 130.3 19.9" stroke="#634f39" stroke-width="2.9"/><path d="M78.6 34.8 Q89.4 49.5 104.3 56.7" stroke="#d7ab7c" stroke-width="2.8"/><path d="M56.9 4.9 Q73.0 17.1 80.7 38.7" stroke="#735c43" stroke-width="4.4"/><path d="M47.5 32.3 Q29.4 27.5 21.4 48.4" stroke="#d5aa7b" stroke-width="3.0"/><path d="M36.6 67.3 Q48.4 74.4 47.8 90.8" stroke="#634f39" stroke-width="3.8"/><path d="M34.8 47.0 Q40.0 61.4 44.7 76.0" stroke="#fdc993" stroke-width="3.8"/><path d="M126.3 8.6 Q144.9 11.0 157.0 28.8" stroke="#745c43" stroke-width="2.9"/><path d="M106.4 83.3 Q119.2 99.2 135.4 109.1" stroke="#fac690" stroke-width="3.4"/><path d="M27.2 2.4 Q17.4 9.0 6.7 5.5" stroke="#715a41" stroke-width="4.3"/><path d="M84.4 19.9 Q101.0 22.9 110.6 40.1" stroke="#d4a87b" stroke-width="3.7"/><path d="M128.3 46.0 Q149.8 52.1 150.5 79.7" stroke="#66513b" stroke-width="3.1"/><path d="M62.9 -1.5 Q76.5 -1.2 82.8 13.9" stroke="#ebbb88" stroke-width="3.3"/><path d="M152.8 83.7 Q153.3 105.4 138.5 116.9" stroke="#6e5840" stroke-width="2.6"/><path d="M13.5 75.0 Q-0.2 90.2 -7.7 111.2" stroke="#d2a779" stroke-width="3.6"/><path d="M128.1 32.6 Q119.4 28.5 110.8 32.6" stroke="#6e573f" stroke-width="4.5"/><path d="M134.4 58.8 Q117.4 66.8 106.6 85.2" stroke="#e1b382" stroke-width="4.5"/><path d="M155.8 29.8 Q140.4 39.3 129.1 55.6" stroke="#6e5840" stroke-width="3.3"/><path d="M81.2 57.8 Q93.1 73.0 109.3 66.8" stroke="#ffcb93" stroke-width="4.1"/><path d="M66.6 60.1 Q71.5 77.8 60.4 90.3" stroke="#745c43" stroke-width="4.1"/><path d="M4.3 48.7 Q4.9 61.5 5.5 74.3" stroke="#f1c08b" stroke-width="3.8"/><path d="M139.5 25.7 Q150.7 19.6 161.5 26.7" stroke="#715941" stroke-width="2.9"/><path d="M145.0 46.4 Q143.6 68.6 151.2 88.7" stroke="#e0b281" stroke-width="2.9"/><path d="M86.9 76.8 Q69.8 79.7 54.0 88.1" stroke="#6a543d" stroke-width="3.2"/><path d="M36.9 40.5 Q16.4 37.6 7.7 61.0" stroke="#f2c08c" stroke-width="3.1"/><path d="M21.1 36.5 Q26.1 47.7 34.2 55.7" stroke="#6b553e" stroke-width="3.6"/><path d="M64.1 85.0 Q52.1 97.6 39.0 86.7" stroke="#d4a97b" stroke-width="4.4"/><path d="M9.2 59.0 Q15.1 74.8 4.3 86.0" stroke="#735b42" stroke-width="2.8"/><path d="M83.3 -4.1 Q78.2 10.6 65.5 9.1" stroke="#d7ab7c" stroke-width="3.9"/><path d="M80.6 46.4 Q68.7 61.6 65.4 82.5" stroke="#775e45" stroke-width="2.9"/><path d="M64.9 17.7 Q77.9 10.1 90.5 18.8" stroke="#f2c08c" stroke-width="3.1"/><path d="M57.4 53.5 Q59.0 71.5 55.6 89.2" stroke="#725b42" stroke-width="4.2"/></g></g><ellipse cx="49.1" cy="16.4" rx="32.7" ry="14.3" fill="#c4a27c" opacity="0.8" filter="url(#fb2)"/><ellipse cx="98.1" cy="20.5" rx="24.5" ry="10.2" fill="#96704c" opacity="0.7" filter="url(#fb2)"/><polygon points="147.2,-20.5 179.9,-20.5 179.9,36.8 158.6,30.7" fill="#4d3826" filter="url(#fb2)"/><ellipse cx="6.5" cy="122.8" rx="7.4" ry="26.6" fill="#e0ad9c" filter="url(#fb2)"/><ellipse cx="158.6" cy="112.5" rx="6.5" ry="26.6" fill="#dfa999" filter="url(#fb2)"/><polygon points="-16.4,130.9 16.4,145.3 32.7,167.8 70.3,225.1 -16.4,225.1" fill="#1b2230" filter="url(#fb2)"/><line x1="3.3" y1="176.0" x2="26.2" y2="208.7" stroke="#5c6779" stroke-width="8.2" stroke-linecap="round" opacity="0.8" filter="url(#fs2)"/><line x1="32.7" y1="180.0" x2="49.1" y2="204.6" stroke="#2e3b55" stroke-width="8.2" stroke-linecap="round" opacity="0.8" filter="url(#fs2)"/><polygon points="179.9,135.0 150.4,145.3 137.3,171.9 179.9,188.2" fill="#181d28" filter="url(#fb2)"/><ellipse cx="158.6" cy="201.5" rx="9.8" ry="6.1" fill="#e9f3f0" filter="url(#fb2)"/><ellipse cx="40.9" cy="126.9" rx="19.6" ry="20.5" fill="#e2ab9d" opacity="0.35" filter="url(#fb2)"/><ellipse cx="127.5" cy="126.9" rx="19.6" ry="20.5" fill="#e2ab9d" opacity="0.35" filter="url(#fb2)"/><ellipse cx="47.4" cy="80.4" rx="15.9" ry="7.5" fill="#9a7068" opacity="0.25" filter="url(#fb2)" transform="rotate(8 47.4 80.4)"/><ellipse cx="47.4" cy="78.0" rx="11.2" ry="1.8" fill="#5a4844" opacity="0.675" filter="url(#fs2)" transform="rotate(8 47.4 78.0)"/><ellipse cx="47.4" cy="79.2" rx="5.3" ry="3.1" fill="#5a4844" opacity="0.75" filter="url(#fs2)" transform="rotate(8 47.4 79.2)"/><ellipse cx="47.4" cy="68.5" rx="14.3" ry="2.7" fill="#9a7454" opacity="0.6" filter="url(#fs2)" transform="rotate(4.0 47.4 68.5)"/><ellipse cx="112.8" cy="78.4" rx="15.9" ry="6.6" fill="#9a7068" opacity="0.25" filter="url(#fb2)" transform="rotate(-6 112.8 78.4)"/><ellipse cx="112.8" cy="75.9" rx="11.2" ry="1.6" fill="#5a4844" opacity="0.675" filter="url(#fs2)" transform="rotate(-6 112.8 75.9)"/><ellipse cx="112.8" cy="77.1" rx="5.3" ry="2.7" fill="#5a4844" opacity="0.75" filter="url(#fs2)" transform="rotate(-6 112.8 77.1)"/><ellipse cx="112.8" cy="67.5" rx="14.3" ry="2.7" fill="#9a7454" opacity="0.6" filter="url(#fs2)" transform="rotate(-3.0 112.8 67.5)"/><line x1="68.7" y1="75.7" x2="94.8" y2="75.7" stroke="#8a6456" stroke-width="2.0" stroke-linecap="round" opacity="0.5" filter="url(#fs2)"/><ellipse cx="81.8" cy="106.4" rx="16.4" ry="10.2" fill="#e3ada0" opacity="0.8" filter="url(#fb2)"/><ellipse cx="71.9" cy="112.5" rx="4.1" ry="2.5" fill="#a8766c" opacity="0.7" filter="url(#fs2)"/><ellipse cx="94.8" cy="112.5" rx="4.1" ry="2.5" fill="#a8766c" opacity="0.7" filter="url(#fs2)"/><ellipse cx="85.0" cy="146.3" rx="22.1" ry="25.6" fill="#dc9a96" filter="url(#fb2)"/><ellipse cx="85.0" cy="149.4" rx="16.4" ry="17.4" fill="#6e2229" filter="url(#fs2)"/><ellipse cx="85.0" cy="156.5" rx="9.8" ry="7.8" fill="#b9646c" opacity="0.9" filter="url(#fs2)"/><ellipse cx="85.0" cy="135.4" rx="13.4" ry="4.9" fill="#ead8ae" filter="url(#fs2)"/></g></svg></div>
<div style="left:710.00px;top:493.90px;width:32.00px;height:21.90px;background:rgba(60,48,48,.86);"></div>
<span class="t" style="left:711.00px;top:497.00px;font-size:18px;color:#fcfcfc;font-weight:bold;-webkit-text-stroke-width:0;transform:scaleX(0.8567);transform-origin:0 0;">JPG</span>
<svg style="left:619.90px;top:517.10px;" width="16" height="16" viewBox="0 0 16 16"><path d="M1.2 0 V16" stroke="#33373b" stroke-width="1.1"/><path d="M1.8 0.8 L6 1.6 L5.6 3.4 L15 6.2 L5 9.2 L1.8 8.6 Z" fill="#f0b90f"/></svg>
<span class="t" style="left:663.70px;top:546.00px;font-size:18.5px;color:#232629;letter-spacing:0.098px;">IMG_3041.jpg</span>
<span class="t" style="left:675.65px;top:613.00px;font-size:14px;color:#232629;letter-spacing:-0.070px;">6/18/22 1:54 PM</span>
<span class="t" style="left:702.20px;top:631.00px;font-size:16.2px;color:#2980b9;letter-spacing:-0.018px;font-style:italic;">person</span>
<div style="left:861.00px;top:293.90px;width:235.40px;height:367.40px;border:1.2px solid #f6f6f6;box-sizing:border-box;"></div>
<div style="left:886.30px;top:300.40px;width:185.10px;height:220.70px;background:linear-gradient(#c6c6c6,#a8a8a8 4px,#a8a8a8 calc(100% - 3px),#bcbcbc);box-shadow:0 0 2px rgba(0,0,0,.3);"></div>
<div style="left:888.50px;top:303.80px;width:180.70px;height:214.50px;background:#0c0c0c;"></div>
<div style="left:889.50px;top:304.80px;width:178.70px;height:212.50px;background:#00ff00;"></div>
<div style="left:893.00px;top:309.30px;width:171.80px;height:204.60px;overflow:hidden;"><svg width="171.8" height="204.6" viewBox="0 0 171.8 204.6" style="left:0;top:0"><defs><filter id="fb3" x="-30%" y="-30%" width="160%" height="160%"><feGaussianBlur stdDeviation="4"/></filter><filter id="fs3" x="-30%" y="-30%" width="160%" height="160%"><feGaussianBlur stdDeviation="1.8"/></filter><filter id="fx3" x="-40%" y="-40%" width="180%" height="180%"><feGaussianBlur stdDeviation="7.6"/></filter><clipPath id="fc3"><rect width="171.8" height="204.6"/></clipPath></defs><g clip-path="url(#fc3)"><rect width="171.8" height="204.6" fill="#dcaa92"/><rect x="-17.2" y="112.5" width="206.2" height="122.8" fill="#74a2de" filter="url(#fb3)"/><ellipse cx="13.7" cy="173.9" rx="20.6" ry="16.4" fill="#a6c6ec" opacity="0.7" filter="url(#fb3)"/><polygon points="-17.2,-20.5 85.9,-20.5 51.5,28.6 17.2,55.2 -17.2,73.7" fill="#7f869b" filter="url(#fb3)"/><polygon points="72.2,-20.5 158.1,-20.5 189.0,49.1 161.5,34.8 130.6,18.4 89.3,18.4 51.5,40.9 20.6,61.4 13.7,53.2 51.5,20.5" fill="#1d1c28" filter="url(#fb3)"/><polygon points="151.2,-20.5 189.0,-20.5 189.0,40.9" fill="#eef2f8" filter="url(#fb3)"/><polygon points="24.1,61.4 51.5,38.9 89.3,17.4 130.6,17.4 161.5,32.7 175.2,61.4 147.7,47.1 113.4,51.1 82.5,40.9 51.5,55.2 27.5,73.7" fill="#4b3128" filter="url(#fb3)"/><clipPath id="fh3_12"><polygon points="24.1,61.4 51.5,38.9 89.3,17.4 130.6,17.4 161.5,32.7 175.2,61.4 147.7,47.1 113.4,51.1 82.5,40.9 51.5,55.2 27.5,73.7"/></clipPath><g clip-path="url(#fh3_12)"><g filter="url(#fs3)" fill="none" stroke-linecap="round" opacity="0.6"><path d="M97.1 46.3 Q95.5 55.1 91.3 62.4" stroke="#593a2f" stroke-width="3.0"/><path d="M146.4 43.8 Q149.7 58.0 141.1 68.7" stroke="#301f19" stroke-width="3.3"/><path d="M36.6 61.1 Q46.2 72.4 59.4 75.7" stroke="#5a3b30" stroke-width="3.1"/><path d="M77.7 61.7 Q83.8 64.9 90.0 67.8" stroke="#32201a" stroke-width="2.6"/><path d="M162.0 63.9 Q171.6 67.9 177.8 77.4" stroke="#5b3b30" stroke-width="3.7"/><path d="M41.5 52.5 Q48.8 55.3 55.0 60.7" stroke="#31201a" stroke-width="3.3"/><path d="M110.3 36.9 Q107.5 45.8 113.9 51.6" stroke="#674337" stroke-width="4.4"/><path d="M118.2 24.1 Q129.0 34.6 126.0 50.8" stroke="#301f19" stroke-width="2.9"/><path d="M84.8 37.2 Q73.9 41.8 70.6 55.1" stroke="#593a2f" stroke-width="3.3"/><path d="M99.1 18.9 Q106.6 28.6 102.4 40.9" stroke="#31201a" stroke-width="3.5"/><path d="M42.7 52.3 Q49.6 58.5 58.0 60.8" stroke="#5f3e33" stroke-width="2.5"/><path d="M86.8 18.8 Q92.2 29.0 97.0 39.5" stroke="#32211b" stroke-width="4.4"/><path d="M46.3 60.7 Q44.0 71.4 51.3 78.1" stroke="#674337" stroke-width="2.4"/><path d="M60.6 51.7 Q69.3 58.1 66.8 69.8" stroke="#291b16" stroke-width="3.7"/></g></g><ellipse cx="158.1" cy="55.2" rx="13.7" ry="10.2" fill="#9a7250" opacity="0.8" filter="url(#fb3)"/><ellipse cx="20.6" cy="71.6" rx="12.0" ry="8.2" fill="#8a6a50" opacity="0.8" filter="url(#fb3)"/><polygon points="20.6,73.7 51.5,55.2 82.5,43.0 113.4,53.2 147.7,49.1 164.9,69.6 161.5,122.8 146.0,163.7 120.3,194.4 68.7,194.4 37.8,163.7 17.2,122.8" fill="#d4a089" filter="url(#fb3)"/><ellipse cx="94.5" cy="88.0" rx="61.8" ry="26.6" fill="#9f7872" opacity="0.95" filter="url(#fx3)"/><ellipse cx="89.3" cy="61.4" rx="42.9" ry="10.2" fill="#c4937a" filter="url(#fb3)"/><polygon points="17.2,81.8 34.4,77.7 58.4,122.8 34.4,135.0" fill="#f2c6a8" filter="url(#fb3)"/><ellipse cx="94.5" cy="159.6" rx="51.5" ry="28.6" fill="#e0ab91" filter="url(#fb3)"/><ellipse cx="5.2" cy="108.4" rx="8.6" ry="26.6" fill="#f3b08e" filter="url(#fb3)"/><ellipse cx="0.0" cy="92.1" rx="2.1" ry="8.2" fill="#ff6a2c" filter="url(#fs3)"/><ellipse cx="168.4" cy="102.3" rx="6.0" ry="20.5" fill="#a8786a" filter="url(#fb3)"/><ellipse cx="94.5" cy="204.6" rx="56.7" ry="24.6" fill="#d7a690" filter="url(#fb3)"/><polygon points="-17.2,190.3 41.2,184.1 51.5,225.1 -17.2,225.1" fill="#e9e6ec" filter="url(#fb3)"/><polygon points="147.7,188.2 189.0,176.0 189.0,225.1 137.4,225.1" fill="#d8c4c4" filter="url(#fb3)"/><line x1="154.6" y1="177.0" x2="175.2" y2="190.3" stroke="#3a3a4a" stroke-width="3.4" stroke-linecap="round" opacity="0.8" filter="url(#fs3)"/><ellipse cx="55.0" cy="82.5" rx="18.0" ry="9.4" fill="#9a7068" opacity="0.25" filter="url(#fb3)" transform="rotate(-5 55.0 82.5)"/><ellipse cx="55.0" cy="80.0" rx="12.6" ry="2.3" fill="#35221f" opacity="0.765" filter="url(#fs3)" transform="rotate(-5 55.0 80.0)"/><ellipse cx="55.0" cy="81.2" rx="6.0" ry="3.9" fill="#35221f" opacity="0.85" filter="url(#fs3)" transform="rotate(-5 55.0 81.2)"/><ellipse cx="55.0" cy="72.6" rx="16.2" ry="2.7" fill="#5a3a30" opacity="0.6" filter="url(#fs3)" transform="rotate(-2.5 55.0 72.6)"/><ellipse cx="123.7" cy="77.7" rx="18.0" ry="9.4" fill="#9a7068" opacity="0.25" filter="url(#fb3)" transform="rotate(3 123.7 77.7)"/><ellipse cx="123.7" cy="75.3" rx="12.6" ry="2.3" fill="#35221f" opacity="0.765" filter="url(#fs3)" transform="rotate(3 123.7 75.3)"/><ellipse cx="123.7" cy="76.5" rx="6.0" ry="3.9" fill="#35221f" opacity="0.85" filter="url(#fs3)" transform="rotate(3 123.7 76.5)"/><ellipse cx="123.7" cy="68.5" rx="16.2" ry="2.7" fill="#5a3a30" opacity="0.6" filter="url(#fs3)" transform="rotate(1.5 123.7 68.5)"/><ellipse cx="96.2" cy="108.4" rx="12.0" ry="10.2" fill="#b5857a" opacity="0.7" filter="url(#fb3)"/><ellipse cx="96.2" cy="135.0" rx="25.8" ry="3.3" fill="#c4868a" opacity="0.9" filter="url(#fs3)"/><ellipse cx="96.2" cy="130.9" rx="20.6" ry="2.5" fill="#a8706a" opacity="0.5" filter="url(#fs3)"/></g></svg></div>
<div style="left:962.85px;top:493.90px;width:32.00px;height:21.90px;background:rgba(60,48,48,.86);"></div>
<span class="t" style="left:963.85px;top:497.00px;font-size:18px;color:#fcfcfc;font-weight:bold;-webkit-text-stroke-width:0;transform:scaleX(0.8567);transform-origin:0 0;">JPG</span>
<svg style="left:871.90px;top:517.10px;" width="16" height="16" viewBox="0 0 16 16"><path d="M1.2 0 V16" stroke="#33373b" stroke-width="1.1"/><path d="M1.8 0.8 L6 1.6 L5.6 3.4 L15 6.2 L5 9.2 L1.8 8.6 Z" fill="#f0b90f"/></svg>
<span class="t" style="left:915.70px;top:546.00px;font-size:18.5px;color:#232629;letter-spacing:0.098px;">IMG_3185.jpg</span>
<span class="t" style="left:927.65px;top:613.00px;font-size:14px;color:#232629;letter-spacing:-0.070px;">6/18/22 1:54 PM</span>
<span class="t" style="left:954.20px;top:631.00px;font-size:16.2px;color:#2980b9;letter-spacing:-0.018px;font-style:italic;">person</span>
<div style="left:1113.00px;top:293.90px;width:235.40px;height:367.40px;border:1.2px solid #f6f6f6;box-sizing:border-box;"></div>
<div style="left:1133.90px;top:300.40px;width:193.40px;height:220.70px;background:linear-gradient(#c6c6c6,#a8a8a8 4px,#a8a8a8 calc(100% - 3px),#bcbcbc);box-shadow:0 0 2px rgba(0,0,0,.3);"></div>
<div style="left:1136.10px;top:303.80px;width:189.00px;height:214.50px;background:#0c0c0c;"></div>
<div style="left:1137.10px;top:304.80px;width:187.00px;height:212.50px;background:#00ff00;"></div>
<div style="left:1140.60px;top:309.30px;width:180.10px;height:204.60px;overflow:hidden;"><svg width="180.1" height="204.6" viewBox="0 0 180.1 204.6" style="left:0;top:0"><defs><filter id="fb4" x="-30%" y="-30%" width="160%" height="160%"><feGaussianBlur stdDeviation="5"/></filter><filter id="fs4" x="-30%" y="-30%" width="160%" height="160%"><feGaussianBlur stdDeviation="2.2"/></filter><filter id="fx4" x="-40%" y="-40%" width="180%" height="180%"><feGaussianBlur stdDeviation="9.5"/></filter><clipPath id="fc4"><rect width="180.1" height="204.6"/></clipPath></defs><g clip-path="url(#fc4)"><rect width="180.1" height="204.6" fill="#c8989c"/><ellipse cx="108.1" cy="126.9" rx="54.0" ry="51.1" fill="#d6a6ac" filter="url(#fx4)"/><polygon points="-18.0,-20.5 198.1,-20.5 198.1,77.7 162.1,67.5 144.1,40.9 108.1,57.3 72.0,61.4 36.0,67.5 25.2,92.1 -18.0,102.3" fill="#5f4236" filter="url(#fb4)"/><clipPath id="fh4_13"><polygon points="-18.0,-20.5 198.1,-20.5 198.1,77.7 162.1,67.5 144.1,40.9 108.1,57.3 72.0,61.4 36.0,67.5 25.2,92.1 -18.0,102.3"/></clipPath><g clip-path="url(#fh4_13)"><g filter="url(#fs4)" fill="none" stroke-linecap="round" opacity="0.55"><path d="M55.7 48.9 Q54.7 74.5 37.6 91.3" stroke="#755142" stroke-width="4.3"/><path d="M27.5 63.4 Q43.9 70.2 53.6 86.8" stroke="#37261f" stroke-width="5.2"/><path d="M138.5 56.6 Q147.9 70.6 163.2 67.9" stroke="#745042" stroke-width="6.4"/><path d="M157.6 63.8 Q152.3 90.0 132.8 105.2" stroke="#3e2b23" stroke-width="6.5"/><path d="M90.1 60.1 Q89.4 77.5 85.3 94.4" stroke="#795445" stroke-width="4.8"/><path d="M36.1 64.8 Q19.7 82.4 6.1 102.9" stroke="#3d2a22" stroke-width="6.2"/><path d="M22.6 55.7 Q23.9 69.3 25.9 82.8" stroke="#755143" stroke-width="4.6"/><path d="M79.9 49.4 Q87.4 60.6 85.6 74.5" stroke="#3a2821" stroke-width="4.5"/><path d="M19.3 27.1 Q36.6 34.3 50.7 47.9" stroke="#885f4d" stroke-width="6.1"/><path d="M152.5 -10.3 Q165.2 8.3 183.5 19.1" stroke="#3e2b23" stroke-width="4.3"/><path d="M90.8 75.4 Q67.8 78.3 58.2 102.2" stroke="#755143" stroke-width="5.0"/><path d="M145.1 5.9 Q132.3 22.4 113.0 22.1" stroke="#3d2a22" stroke-width="5.8"/><path d="M98.2 40.0 Q110.5 58.1 111.1 81.0" stroke="#795445" stroke-width="4.3"/><path d="M116.6 2.0 Q122.4 12.2 129.8 20.9" stroke="#3c2a22" stroke-width="5.5"/><path d="M2.9 33.5 Q-1.1 48.7 11.1 56.5" stroke="#704e40" stroke-width="4.2"/><path d="M56.8 15.7 Q56.5 28.1 51.8 39.4" stroke="#3a2821" stroke-width="6.5"/><path d="M0.8 8.9 Q1.9 34.2 1.2 59.6" stroke="#7d5747" stroke-width="6.0"/><path d="M53.5 -21.2 Q61.7 3.3 53.3 27.7" stroke="#3d2a23" stroke-width="6.0"/><path d="M156.0 10.5 Q157.7 27.6 149.9 42.4" stroke="#765243" stroke-width="4.4"/><path d="M60.5 -8.0 Q61.5 4.4 65.9 15.8" stroke="#3d2b23" stroke-width="3.8"/><path d="M138.6 0.3 Q145.1 19.2 140.2 38.7" stroke="#795444" stroke-width="5.2"/><path d="M8.1 74.8 Q28.4 82.4 41.2 101.9" stroke="#37261f" stroke-width="5.0"/><path d="M0.9 -3.4 Q-5.4 17.7 11.2 29.7" stroke="#865d4c" stroke-width="3.9"/><path d="M105.8 1.6 Q95.6 12.5 87.0 24.9" stroke="#3f2c24" stroke-width="4.2"/><path d="M10.0 17.1 Q2.4 27.5 -8.2 33.6" stroke="#7c5646" stroke-width="4.9"/><path d="M153.7 3.9 Q143.9 21.5 135.1 39.8" stroke="#402c24" stroke-width="6.8"/><path d="M85.3 36.2 Q91.5 62.8 73.4 81.1" stroke="#875e4c" stroke-width="4.2"/><path d="M97.3 67.7 Q100.5 83.5 95.0 98.5" stroke="#402c24" stroke-width="4.1"/><path d="M15.2 -7.6 Q3.8 -0.8 3.5 13.8" stroke="#825a4a" stroke-width="7.0"/><path d="M151.7 21.1 Q152.3 45.7 139.7 65.7" stroke="#3d2a22" stroke-width="6.3"/></g></g><ellipse cx="81.0" cy="40.9" rx="36.0" ry="16.4" fill="#432c24" opacity="0.8" filter="url(#fb4)"/><ellipse cx="68.4" cy="6.1" rx="10.8" ry="5.1" fill="#a88c6c" opacity="0.8" filter="url(#fb4)"/><ellipse cx="153.1" cy="20.5" rx="27.0" ry="16.4" fill="#7a5a48" opacity="0.8" filter="url(#fb4)"/><ellipse cx="99.1" cy="67.5" rx="50.4" ry="12.3" fill="#b88e8c" filter="url(#fb4)"/><ellipse cx="147.7" cy="57.3" rx="14.4" ry="12.3" fill="#c9a09a" opacity="0.8" filter="url(#fb4)"/><ellipse cx="5.4" cy="116.6" rx="7.2" ry="20.5" fill="#b37452" filter="url(#fb4)"/><polygon points="-18.0,135.0 18.0,139.1 28.8,163.7 25.2,190.3 -18.0,190.3" fill="#7f8c1f" filter="url(#fb4)"/><ellipse cx="5.4" cy="149.4" rx="5.4" ry="6.1" fill="#cfca60" opacity="0.9" filter="url(#fs4)"/><ellipse cx="16.2" cy="167.8" rx="5.4" ry="6.1" fill="#c8c860" opacity="0.8" filter="url(#fs4)"/><polygon points="-18.0,188.2 21.6,188.2 18.0,225.1 -18.0,225.1" fill="#a89ab0" filter="url(#fb4)"/><polygon points="198.1,153.4 171.1,163.7 165.7,225.1 198.1,225.1" fill="#392636" filter="url(#fb4)"/><ellipse cx="147.7" cy="118.7" rx="18.0" ry="14.3" fill="#eab4c0" opacity="0.8" filter="url(#fb4)"/><ellipse cx="54.0" cy="126.9" rx="18.0" ry="14.3" fill="#e6aebb" opacity="0.7" filter="url(#fb4)"/><ellipse cx="48.6" cy="95.8" rx="23.0" ry="9.4" fill="#9a7068" opacity="0.25" filter="url(#fb4)" transform="rotate(-8 48.6 95.8)"/><ellipse cx="48.6" cy="93.3" rx="16.1" ry="2.3" fill="#553640" opacity="0.675" filter="url(#fs4)" transform="rotate(-8 48.6 93.3)"/><ellipse cx="48.6" cy="94.5" rx="7.7" ry="3.9" fill="#553640" opacity="0.75" filter="url(#fs4)" transform="rotate(-8 48.6 94.5)"/><ellipse cx="48.6" cy="81.8" rx="20.7" ry="2.7" fill="#8a6460" opacity="0.6" filter="url(#fs4)" transform="rotate(-4.0 48.6 81.8)"/><ellipse cx="131.5" cy="84.5" rx="21.6" ry="8.5" fill="#9a7068" opacity="0.25" filter="url(#fb4)" transform="rotate(3 131.5 84.5)"/><ellipse cx="131.5" cy="82.0" rx="15.1" ry="2.0" fill="#553640" opacity="0.675" filter="url(#fs4)" transform="rotate(3 131.5 82.0)"/><ellipse cx="131.5" cy="83.3" rx="7.2" ry="3.5" fill="#553640" opacity="0.75" filter="url(#fs4)" transform="rotate(3 131.5 83.3)"/><ellipse cx="131.5" cy="71.6" rx="19.5" ry="2.7" fill="#8a6460" opacity="0.6" filter="url(#fs4)" transform="rotate(1.5 131.5 71.6)"/><ellipse cx="93.7" cy="126.9" rx="14.4" ry="14.3" fill="#c9939a" opacity="0.7" filter="url(#fb4)"/><ellipse cx="99.1" cy="156.5" rx="30.6" ry="3.7" fill="#a5667a" opacity="0.85" filter="url(#fs4)" transform="rotate(-3 99.1 156.5)"/><ellipse cx="99.1" cy="165.7" rx="21.6" ry="5.1" fill="#dba8b0" opacity="0.7" filter="url(#fb4)"/></g></svg></div>
<div style="left:1214.60px;top:493.90px;width:32.00px;height:21.90px;background:rgba(60,48,48,.86);"></div>
<span class="t" style="left:1215.60px;top:497.00px;font-size:18px;color:#fcfcfc;font-weight:bold;-webkit-text-stroke-width:0;transform:scaleX(0.8567);transform-origin:0 0;">JPG</span>
<svg style="left:1123.90px;top:517.10px;" width="16" height="16" viewBox="0 0 16 16"><path d="M1.2 0 V16" stroke="#33373b" stroke-width="1.1"/><path d="M1.8 0.8 L6 1.6 L5.6 3.4 L15 6.2 L5 9.2 L1.8 8.6 Z" fill="#f0b90f"/></svg>
<span class="t" style="left:1167.70px;top:546.00px;font-size:18.5px;color:#232629;letter-spacing:0.098px;">IMG_3200.jpg</span>
<span class="t" style="left:1179.65px;top:613.00px;font-size:14px;color:#232629;letter-spacing:-0.070px;">6/16/22 1:42 PM</span>
<span class="t" style="left:1179.00px;top:631.00px;font-size:16.2px;color:#2980b9;letter-spacing:0.017px;font-style:italic;">bench, person</span>
<div style="left:607.40px;top:763.30px;width:236.90px;height:368.40px;border-left:1.2px solid #3daee9;border-top:1.2px solid #3daee9;box-sizing:border-box;"></div>
<div style="left:610.00px;top:765.90px;width:233.70px;height:365.60px;background:#3daee9;"></div>
<div style="left:632.40px;top:772.80px;width:187.30px;height:218.20px;background:#2a86bd;box-shadow:0 0 1.5px #2a86bd;"></div>
<div style="left:634.60px;top:775.80px;width:182.90px;height:213.00px;background:#0c0c0c;"></div>
<div style="left:635.80px;top:777.00px;width:180.50px;height:210.60px;overflow:hidden;"><svg width="180.5" height="210.6" viewBox="0 0 180.5 210.6" style="left:0;top:0"><defs><filter id="fb5" x="-30%" y="-30%" width="160%" height="160%"><feGaussianBlur stdDeviation="5"/></filter><filter id="fs5" x="-30%" y="-30%" width="160%" height="160%"><feGaussianBlur stdDeviation="2.2"/></filter><filter id="fx5" x="-40%" y="-40%" width="180%" height="180%"><feGaussianBlur stdDeviation="9.5"/></filter><clipPath id="fc5"><rect width="180.5" height="210.6"/></clipPath></defs><g clip-path="url(#fc5)"><rect width="180.5" height="210.6" fill="#c79985"/><ellipse cx="90.2" cy="126.4" rx="54.1" ry="52.6" fill="#d2a48f" filter="url(#fx5)"/><polygon points="-18.0,-21.1 198.5,-21.1 198.5,105.3 162.4,88.5 148.0,54.8 108.3,40.0 63.2,42.1 32.5,63.2 18.0,105.3 -18.0,115.8" fill="#7a5a41" filter="url(#fb5)"/><clipPath id="fh5_14"><polygon points="-18.0,-21.1 198.5,-21.1 198.5,105.3 162.4,88.5 148.0,54.8 108.3,40.0 63.2,42.1 32.5,63.2 18.0,105.3 -18.0,115.8"/></clipPath><g clip-path="url(#fh5_14)"><g filter="url(#fs5)" fill="none" stroke-linecap="round" opacity="0.45"><path d="M28.3 61.1 Q26.1 85.5 10.3 101.6" stroke="#997151" stroke-width="7.2"/><path d="M126.1 22.2 Q125.6 40.3 111.6 48.0" stroke="#4f3a2a" stroke-width="5.3"/><path d="M150.4 26.2 Q170.1 33.4 175.0 56.8" stroke="#a57958" stroke-width="6.5"/><path d="M124.5 8.7 Q125.8 22.7 115.2 29.6" stroke="#493526" stroke-width="5.2"/><path d="M190.3 46.3 Q176.3 37.2 162.8 47.2" stroke="#a47957" stroke-width="7.0"/><path d="M24.5 56.8 Q14.2 65.2 15.7 79.7" stroke="#453325" stroke-width="6.4"/><path d="M21.1 39.2 Q42.2 42.1 48.8 65.6" stroke="#a17655" stroke-width="7.5"/><path d="M-1.0 30.7 Q16.1 33.3 33.3 34.3" stroke="#453325" stroke-width="4.8"/><path d="M88.2 63.2 Q88.1 79.6 85.2 95.5" stroke="#a07655" stroke-width="6.7"/><path d="M3.4 40.2 Q25.9 43.8 30.9 69.7" stroke="#523c2b" stroke-width="5.0"/><path d="M110.2 65.0 Q127.1 63.8 143.8 67.4" stroke="#af815d" stroke-width="5.7"/><path d="M94.6 98.3 Q100.9 110.8 111.0 119.2" stroke="#463425" stroke-width="6.2"/><path d="M34.0 43.4 Q46.0 46.9 58.4 46.5" stroke="#b0825e" stroke-width="5.5"/><path d="M162.6 34.0 Q172.1 37.9 175.4 49.0" stroke="#463325" stroke-width="5.3"/><path d="M146.5 17.8 Q161.2 26.3 168.7 43.5" stroke="#ae805c" stroke-width="7.3"/><path d="M72.4 43.2 Q66.3 64.9 60.8 86.8" stroke="#4f3a2a" stroke-width="7.6"/><path d="M81.0 42.3 Q66.7 49.6 51.3 46.7" stroke="#a97d5a" stroke-width="7.9"/><path d="M124.4 25.2 Q111.7 34.7 96.8 32.0" stroke="#493627" stroke-width="4.8"/><path d="M25.7 74.4 Q35.9 81.1 46.7 86.0" stroke="#9f7554" stroke-width="5.9"/><path d="M136.3 15.2 Q147.2 26.9 147.2 44.2" stroke="#463325" stroke-width="5.0"/><path d="M136.6 5.7 Q128.5 15.3 125.3 28.3" stroke="#a57a58" stroke-width="5.8"/><path d="M170.1 65.5 Q171.8 76.8 166.8 86.6" stroke="#4a3627" stroke-width="6.2"/><path d="M152.3 96.3 Q168.2 101.4 184.7 103.8" stroke="#af815d" stroke-width="4.8"/><path d="M175.2 48.0 Q155.7 34.3 137.7 50.7" stroke="#503b2a" stroke-width="4.7"/><path d="M131.4 29.1 Q147.5 24.4 155.2 41.6" stroke="#a37857" stroke-width="6.1"/><path d="M142.6 43.3 Q146.4 57.9 140.5 71.4" stroke="#523d2c" stroke-width="7.0"/><path d="M128.0 -0.1 Q116.5 -9.0 105.2 0.2" stroke="#b0825e" stroke-width="7.8"/><path d="M152.2 31.5 Q163.8 44.2 156.5 60.6" stroke="#523c2b" stroke-width="4.9"/></g></g><rect x="-18.0" y="-21.1" width="216.6" height="33.7" fill="#5f4532" opacity="0.7" filter="url(#fb5)"/><ellipse cx="90.2" cy="63.2" rx="54.1" ry="16.8" fill="#b8917a" filter="url(#fb5)"/><ellipse cx="162.4" cy="117.9" rx="10.8" ry="12.6" fill="#e6ad94" opacity="0.9" filter="url(#fb5)"/><ellipse cx="3.6" cy="143.2" rx="9.0" ry="21.1" fill="#bf9072" filter="url(#fb5)"/><polygon points="-18.0,153.7 18.0,155.8 21.7,181.1 -18.0,185.3" fill="#6f7f8f" filter="url(#fb5)"/><polygon points="-18.0,185.3 23.5,178.0 32.5,231.7 -18.0,231.7" fill="#2a2c35" filter="url(#fb5)"/><polygon points="198.5,130.6 173.3,145.3 162.4,168.5 157.0,231.7 198.5,231.7" fill="#252a35" filter="url(#fb5)"/><ellipse cx="176.9" cy="147.4" rx="5.4" ry="12.6" fill="#c08a70" filter="url(#fb5)"/><ellipse cx="93.9" cy="204.3" rx="54.1" ry="12.6" fill="#b48c76" filter="url(#fb5)"/><ellipse cx="48.7" cy="96.9" rx="23.0" ry="10.7" fill="#9a7068" opacity="0.25" filter="url(#fb5)"/><ellipse cx="48.7" cy="94.3" rx="16.1" ry="2.5" fill="#4f3838" opacity="0.63" filter="url(#fs5)"/><ellipse cx="48.7" cy="95.6" rx="7.7" ry="4.4" fill="#4f3838" opacity="0.7" filter="url(#fs5)"/><ellipse cx="48.7" cy="83.2" rx="20.7" ry="2.7" fill="#8a6a58" opacity="0.6" filter="url(#fs5)"/><ellipse cx="124.5" cy="95.8" rx="23.0" ry="10.7" fill="#9a7068" opacity="0.25" filter="url(#fb5)"/><ellipse cx="124.5" cy="93.3" rx="16.1" ry="2.5" fill="#4f3838" opacity="0.63" filter="url(#fs5)"/><ellipse cx="124.5" cy="94.6" rx="7.7" ry="4.4" fill="#4f3838" opacity="0.7" filter="url(#fs5)"/><ellipse cx="124.5" cy="82.1" rx="20.7" ry="2.7" fill="#8a6a58" opacity="0.6" filter="url(#fs5)"/><ellipse cx="90.2" cy="126.4" rx="12.6" ry="12.6" fill="#d9a48e" opacity="0.8" filter="url(#fb5)"/><ellipse cx="90.2" cy="137.9" rx="16.2" ry="2.5" fill="#9a6a5a" opacity="0.5" filter="url(#fs5)"/><ellipse cx="93.9" cy="148.5" rx="27.1" ry="3.4" fill="#d9b8a8" opacity="0.7" filter="url(#fs5)"/><ellipse cx="93.9" cy="159.0" rx="32.5" ry="3.8" fill="#7e4c42" opacity="0.8" filter="url(#fs5)"/><ellipse cx="93.9" cy="170.6" rx="21.7" ry="6.3" fill="#c9948a" opacity="0.6" filter="url(#fb5)"/></g></svg></div>
<div style="left:710.05px;top:964.90px;width:32.00px;height:21.90px;background:rgba(60,48,48,.86);"></div>
<span class="t" style="left:711.05px;top:968.00px;font-size:18px;color:#fcfcfc;font-weight:bold;-webkit-text-stroke-width:0;transform:scaleX(0.8567);transform-origin:0 0;">JPG</span>
<svg style="left:619.90px;top:988.10px;" width="16" height="16" viewBox="0 0 16 16"><path d="M1.2 0 V16" stroke="#33373b" stroke-width="1.1"/><path d="M1.8 0.8 L6 1.6 L5.6 3.4 L15 6.2 L5 9.2 L1.8 8.6 Z" fill="#f0b90f"/></svg>
<span class="t" style="left:618.90px;top:1017.00px;font-size:18.5px;color:#fcfcfc;letter-spacing:-0.172px;">2022.06.13-Alaska Day ...</span>
<span class="t" style="left:675.65px;top:1084.00px;font-size:14px;color:#fcfcfc;letter-spacing:-0.070px;">6/16/22 1:00 AM</span>
<span class="t" style="left:635.90px;top:1102.00px;font-size:16.2px;color:#fcfcfc;letter-spacing:0.010px;font-style:italic;">Adam, aeroplane, person</span>
<div style="left:861.00px;top:764.90px;width:235.40px;height:367.40px;border:1.2px solid #f6f6f6;box-sizing:border-box;"></div>
<div style="left:881.40px;top:772.40px;width:193.10px;height:219.20px;background:linear-gradient(#c6c6c6,#a8a8a8 4px,#a8a8a8 calc(100% - 3px),#bcbcbc);box-shadow:0 0 2px rgba(0,0,0,.3);"></div>
<div style="left:883.60px;top:775.80px;width:188.70px;height:213.00px;background:#0c0c0c;"></div>
<div style="left:884.80px;top:777.00px;width:186.30px;height:210.60px;overflow:hidden;"><svg width="186.3" height="210.6" viewBox="0 0 186.3 210.6" style="left:0;top:0"><defs><filter id="fb6" x="-30%" y="-30%" width="160%" height="160%"><feGaussianBlur stdDeviation="4.5"/></filter><filter id="fs6" x="-30%" y="-30%" width="160%" height="160%"><feGaussianBlur stdDeviation="2.0"/></filter><filter id="fx6" x="-40%" y="-40%" width="180%" height="180%"><feGaussianBlur stdDeviation="8.5"/></filter><clipPath id="fc6"><rect width="186.3" height="210.6"/></clipPath></defs><g clip-path="url(#fc6)"><rect width="186.3" height="210.6" fill="#b39c86"/><polygon points="-18.6,-21.1 204.9,-21.1 204.9,67.4 175.1,59.0 158.4,33.7 111.8,25.3 55.9,42.1 22.4,63.2 11.2,84.2 -18.6,88.5" fill="#8a745e" filter="url(#fb6)"/><clipPath id="fh6_15"><polygon points="-18.6,-21.1 204.9,-21.1 204.9,67.4 175.1,59.0 158.4,33.7 111.8,25.3 55.9,42.1 22.4,63.2 11.2,84.2 -18.6,88.5"/></clipPath><g clip-path="url(#fh6_15)"><g filter="url(#fs6)" fill="none" stroke-linecap="round" opacity="0.6"><path d="M180.0 -12.7 Q189.2 1.2 179.6 14.8" stroke="#c7a888" stroke-width="5.7"/><path d="M133.6 62.8 Q123.1 73.3 120.3 88.8" stroke="#524538" stroke-width="4.0"/><path d="M54.5 -3.6 Q58.4 22.9 43.7 44.1" stroke="#c1a283" stroke-width="5.8"/><path d="M87.4 5.1 Q93.9 21.4 103.1 35.8" stroke="#4e4135" stroke-width="4.3"/><path d="M103.7 65.0 Q94.0 84.4 108.5 99.6" stroke="#c3a485" stroke-width="4.6"/><path d="M164.9 -4.3 Q174.4 5.5 187.2 7.7" stroke="#5d4e3f" stroke-width="5.3"/><path d="M56.8 31.5 Q61.3 46.6 50.0 56.1" stroke="#a88d72" stroke-width="4.6"/><path d="M146.7 33.7 Q146.8 57.1 166.4 64.5" stroke="#504336" stroke-width="4.2"/><path d="M46.5 11.6 Q47.5 28.3 41.2 43.4" stroke="#c4a586" stroke-width="4.5"/><path d="M16.0 61.9 Q14.0 80.3 11.7 98.7" stroke="#4e4235" stroke-width="4.3"/><path d="M156.9 66.4 Q147.7 81.8 156.1 97.8" stroke="#a58b70" stroke-width="5.9"/><path d="M19.0 20.9 Q44.0 35.9 40.1 67.5" stroke="#4d4134" stroke-width="5.6"/><path d="M107.9 20.6 Q113.1 41.7 104.4 61.2" stroke="#bd9f80" stroke-width="3.5"/><path d="M-0.6 12.5 Q-1.2 30.0 3.9 46.4" stroke="#524538" stroke-width="5.2"/><path d="M114.7 4.4 Q98.1 24.9 107.2 50.7" stroke="#c4a585" stroke-width="3.3"/><path d="M114.4 15.5 Q130.1 26.1 135.0 46.1" stroke="#4f4236" stroke-width="6.0"/><path d="M60.5 64.7 Q59.3 81.0 62.8 96.8" stroke="#af9377" stroke-width="5.2"/><path d="M44.4 -6.6 Q69.9 -8.2 82.3 17.0" stroke="#594b3c" stroke-width="5.6"/><path d="M111.0 17.0 Q110.1 30.7 103.6 42.3" stroke="#a78c72" stroke-width="5.3"/><path d="M107.2 26.5 Q113.5 47.5 96.9 59.2" stroke="#5a4c3d" stroke-width="5.4"/><path d="M33.0 37.2 Q27.5 57.6 25.0 78.8" stroke="#b99b7e" stroke-width="5.4"/><path d="M63.2 2.4 Q67.9 21.0 74.2 38.9" stroke="#4e4235" stroke-width="4.6"/><path d="M30.6 46.2 Q17.8 61.3 27.7 79.0" stroke="#c3a485" stroke-width="5.1"/><path d="M63.5 17.7 Q79.9 14.2 88.5 30.5" stroke="#5e4f40" stroke-width="5.8"/><path d="M112.4 61.8 Q128.0 74.9 147.4 76.9" stroke="#ab9074" stroke-width="5.5"/><path d="M138.3 33.2 Q127.1 44.8 130.5 61.5" stroke="#4f4236" stroke-width="3.4"/></g></g><ellipse cx="83.8" cy="8.4" rx="33.5" ry="12.6" fill="#5d4a3a" opacity="0.8" filter="url(#fb6)"/><ellipse cx="37.3" cy="25.3" rx="26.1" ry="16.8" fill="#8b765f" opacity="0.8" filter="url(#fb6)"/><ellipse cx="149.0" cy="12.6" rx="37.3" ry="12.6" fill="#b5a48e" opacity="0.8" filter="url(#fb6)"/><ellipse cx="106.2" cy="105.3" rx="74.5" ry="75.8" fill="#b8a08a" filter="url(#fb6)" transform="rotate(-18 106.2 105.3)"/><ellipse cx="93.1" cy="54.8" rx="41.0" ry="14.7" fill="#ab917b" filter="url(#fb6)" transform="rotate(-12 93.1 54.8)"/><ellipse cx="149.0" cy="126.4" rx="24.2" ry="35.8" fill="#d2bfaa" opacity="0.85" filter="url(#fx6)"/><ellipse cx="115.5" cy="172.7" rx="29.8" ry="14.7" fill="#d2c0ac" opacity="0.7" filter="url(#fx6)"/><ellipse cx="55.9" cy="130.6" rx="18.6" ry="21.1" fill="#c9a698" opacity="0.7" filter="url(#fb6)"/><polygon points="-18.6,75.8 7.5,80.0 22.4,90.6 33.5,136.9 68.9,179.0 80.1,231.7 -18.6,231.7" fill="#26344a" filter="url(#fb6)"/><polygon points="-18.6,84.2 18.6,94.8 26.1,147.4 -18.6,151.6" fill="#5f7a9c" opacity="0.8" filter="url(#fb6)"/><line x1="50.3" y1="164.3" x2="55.9" y2="210.6" stroke="#9fb6cf" stroke-width="3.7" stroke-linecap="round" opacity="0.7" filter="url(#fs6)"/><polygon points="59.6,183.2 82.0,176.9 93.1,231.7 67.1,231.7" fill="#1b1b22" filter="url(#fb6)"/><ellipse cx="149.0" cy="189.5" rx="37.3" ry="12.6" fill="#8e7d6a" opacity="0.9" filter="url(#fb6)"/><polygon points="130.4,231.7 141.6,198.0 204.9,189.5 204.9,231.7" fill="#a9bcb0" filter="url(#fb6)"/><ellipse cx="185.4" cy="80.0" rx="5.6" ry="25.3" fill="#b5614a" filter="url(#fb6)"/><ellipse cx="48.4" cy="93.3" rx="21.0" ry="11.6" fill="#9a7068" opacity="0.25" filter="url(#fb6)" transform="rotate(-10 48.4 93.3)"/><ellipse cx="48.4" cy="90.8" rx="14.7" ry="2.8" fill="#3a2d29" opacity="0.7200000000000001" filter="url(#fs6)" transform="rotate(-10 48.4 90.8)"/><ellipse cx="48.4" cy="92.0" rx="7.0" ry="4.8" fill="#3a2d29" opacity="0.8" filter="url(#fs6)" transform="rotate(-10 48.4 92.0)"/><ellipse cx="48.4" cy="79.0" rx="18.9" ry="2.7" fill="#6a5444" opacity="0.6" filter="url(#fs6)" transform="rotate(-5.0 48.4 79.0)"/><ellipse cx="111.8" cy="74.3" rx="21.0" ry="11.6" fill="#9a7068" opacity="0.25" filter="url(#fb6)" transform="rotate(-14 111.8 74.3)"/><ellipse cx="111.8" cy="71.8" rx="14.7" ry="2.8" fill="#3a2d29" opacity="0.7200000000000001" filter="url(#fs6)" transform="rotate(-14 111.8 71.8)"/><ellipse cx="111.8" cy="73.1" rx="7.0" ry="4.8" fill="#3a2d29" opacity="0.8" filter="url(#fs6)" transform="rotate(-14 111.8 73.1)"/><ellipse cx="111.8" cy="60.0" rx="18.9" ry="2.7" fill="#6a5444" opacity="0.6" filter="url(#fs6)" transform="rotate(-7.0 111.8 60.0)"/><ellipse cx="82.0" cy="115.8" rx="9.3" ry="14.7" fill="#8f7565" opacity="0.7" filter="url(#fb6)" transform="rotate(-15 82.0 115.8)"/><ellipse cx="93.1" cy="122.1" rx="6.5" ry="6.3" fill="#dbc0ae" opacity="0.8" filter="url(#fs6)"/><line x1="72.7" y1="144.3" x2="126.7" y2="128.5" stroke="#6b4a40" stroke-width="3.0" stroke-linecap="round" opacity="0.85" filter="url(#fs6)"/><line x1="78.2" y1="150.6" x2="115.5" y2="140.0" stroke="#a58472" stroke-width="3.7" stroke-linecap="round" opacity="0.5" filter="url(#fs6)"/></g></svg></div>
<div style="left:961.95px;top:964.90px;width:32.00px;height:21.90px;background:rgba(60,48,48,.86);"></div>
<span class="t" style="left:962.95px;top:968.00px;font-size:18px;color:#fcfcfc;font-weight:bold;-webkit-text-stroke-width:0;transform:scaleX(0.8567);transform-origin:0 0;">JPG</span>
<svg style="left:871.90px;top:988.10px;" width="16" height="16" viewBox="0 0 16 16"><path d="M1.2 0 V16" stroke="#33373b" stroke-width="1.1"/><path d="M1.8 0.8 L6 1.6 L5.6 3.4 L15 6.2 L5 9.2 L1.8 8.6 Z" fill="#f0b90f"/></svg>
<span class="t" style="left:870.90px;top:1017.00px;font-size:18.5px;color:#232629;letter-spacing:-0.172px;">2022.06.13-Alaska Day ...</span>
<span class="t" style="left:927.65px;top:1084.00px;font-size:14px;color:#232629;letter-spacing:-0.070px;">6/14/22 2:46 AM</span>
<span class="t" style="left:928.85px;top:1102.00px;font-size:16.2px;color:#2980b9;letter-spacing:-0.061px;font-style:italic;">Adam, person</span>
<div style="left:1113.00px;top:764.90px;width:235.40px;height:367.40px;border:1.2px solid #f6f6f6;box-sizing:border-box;"></div>
<div style="left:1135.70px;top:772.40px;width:188.60px;height:219.20px;background:linear-gradient(#c6c6c6,#a8a8a8 4px,#a8a8a8 calc(100% - 3px),#bcbcbc);box-shadow:0 0 2px rgba(0,0,0,.3);"></div>
<div style="left:1137.90px;top:775.80px;width:184.20px;height:213.00px;background:#0c0c0c;"></div>
<div style="left:1139.10px;top:777.00px;width:181.80px;height:210.60px;overflow:hidden;"><svg width="181.8" height="210.6" viewBox="0 0 181.8 210.6" style="left:0;top:0"><defs><filter id="fb7" x="-30%" y="-30%" width="160%" height="160%"><feGaussianBlur stdDeviation="4"/></filter><filter id="fs7" x="-30%" y="-30%" width="160%" height="160%"><feGaussianBlur stdDeviation="1.8"/></filter><filter id="fx7" x="-40%" y="-40%" width="180%" height="180%"><feGaussianBlur stdDeviation="7.6"/></filter><clipPath id="fc7"><rect width="181.8" height="210.6"/></clipPath></defs><g clip-path="url(#fc7)"><rect width="181.8" height="210.6" fill="#d4966a"/><ellipse cx="63.6" cy="115.8" rx="36.4" ry="31.6" fill="#e9b690" filter="url(#fx7)"/><polygon points="-18.2,-21.1 200.0,-21.1 200.0,84.2 169.1,69.5 156.3,50.5 112.7,46.3 81.8,56.9 45.4,56.9 23.6,75.8 14.5,94.8 -18.2,94.8" fill="#7d5630" filter="url(#fb7)"/><clipPath id="fh7_16"><polygon points="-18.2,-21.1 200.0,-21.1 200.0,84.2 169.1,69.5 156.3,50.5 112.7,46.3 81.8,56.9 45.4,56.9 23.6,75.8 14.5,94.8 -18.2,94.8"/></clipPath><g clip-path="url(#fh7_16)"><g filter="url(#fs7)" fill="none" stroke-linecap="round" opacity="0.9"><path d="M63.3 34.8 Q63.4 46.3 68.2 56.2" stroke="#a26f3e" stroke-width="3.7"/><path d="M110.4 -7.2 Q112.7 3.2 120.5 9.1" stroke="#47311b" stroke-width="3.9"/><path d="M134.3 79.7 Q141.0 93.5 152.7 101.5" stroke="#af7843" stroke-width="3.1"/><path d="M78.4 52.2 Q85.5 57.3 87.7 66.6" stroke="#4a331c" stroke-width="5.1"/><path d="M69.1 25.9 Q72.2 45.1 57.3 54.3" stroke="#9e6c3c" stroke-width="5.6"/><path d="M151.9 65.8 Q153.8 75.1 150.8 84.0" stroke="#48311b" stroke-width="4.3"/><path d="M16.0 60.9 Q12.0 66.3 7.9 71.6" stroke="#b07943" stroke-width="5.5"/><path d="M84.8 62.9 Q94.6 74.0 87.9 87.9" stroke="#4d351d" stroke-width="3.4"/><path d="M38.1 27.5 Q43.7 37.7 46.3 49.4" stroke="#aa7541" stroke-width="3.9"/><path d="M101.6 82.1 Q96.0 94.7 84.2 98.5" stroke="#52381f" stroke-width="3.3"/><path d="M5.9 11.2 Q17.1 3.6 27.9 11.9" stroke="#b27b44" stroke-width="4.9"/><path d="M161.2 66.6 Q173.6 66.7 180.8 78.5" stroke="#49321c" stroke-width="3.1"/><path d="M88.7 84.4 Q97.2 81.3 102.3 89.8" stroke="#a16e3d" stroke-width="4.3"/><path d="M126.6 42.8 Q132.6 45.6 139.0 44.6" stroke="#48321b" stroke-width="5.5"/><path d="M84.2 3.0 Q95.0 4.6 98.7 16.6" stroke="#98683a" stroke-width="4.2"/><path d="M164.9 17.1 Q154.9 28.7 140.7 27.9" stroke="#4c341d" stroke-width="3.5"/><path d="M128.3 74.5 Q123.8 84.4 114.4 82.0" stroke="#a26f3e" stroke-width="3.9"/><path d="M40.1 7.9 Q53.6 11.7 67.2 15.6" stroke="#4a331c" stroke-width="4.5"/><path d="M85.9 44.4 Q83.7 55.8 85.8 67.4" stroke="#97673a" stroke-width="4.8"/><path d="M130.2 15.4 Q140.5 28.5 133.1 44.0" stroke="#51371f" stroke-width="3.9"/><path d="M28.4 57.3 Q31.8 67.1 33.9 77.5" stroke="#9b6b3b" stroke-width="4.9"/><path d="M111.2 9.0 Q108.0 23.7 118.3 33.0" stroke="#46301b" stroke-width="3.1"/><path d="M125.1 12.1 Q113.6 13.9 102.2 15.8" stroke="#9b6b3b" stroke-width="5.3"/><path d="M160.3 50.3 Q155.0 62.7 150.2 75.4" stroke="#533920" stroke-width="4.7"/><path d="M136.9 40.6 Q142.8 51.7 153.4 56.2" stroke="#a06e3d" stroke-width="5.0"/><path d="M151.4 9.2 Q164.0 22.7 178.2 11.4" stroke="#51371f" stroke-width="5.2"/><path d="M164.2 7.8 Q177.0 8.3 182.4 21.7" stroke="#ad7742" stroke-width="5.5"/><path d="M40.3 10.8 Q46.7 18.1 43.3 27.8" stroke="#47301b" stroke-width="3.1"/><path d="M36.8 55.4 Q24.2 60.0 18.0 73.4" stroke="#a26f3e" stroke-width="3.4"/><path d="M148.8 34.9 Q155.9 42.6 165.6 42.8" stroke="#48321b" stroke-width="4.0"/><path d="M-10.1 14.3 Q1.5 25.2 16.3 22.2" stroke="#a26f3e" stroke-width="4.6"/><path d="M76.0 62.1 Q76.5 69.7 73.9 76.6" stroke="#553a20" stroke-width="4.8"/><path d="M70.2 87.5 Q76.3 90.2 81.4 94.9" stroke="#956739" stroke-width="5.3"/><path d="M69.0 81.4 Q77.7 97.1 93.7 95.2" stroke="#48311b" stroke-width="3.6"/><path d="M115.1 57.2 Q106.5 65.9 96.6 59.2" stroke="#b07943" stroke-width="5.4"/><path d="M102.7 50.0 Q94.2 49.6 85.8 51.9" stroke="#4f361e" stroke-width="3.8"/><path d="M19.8 30.9 Q32.3 35.4 33.5 50.5" stroke="#a16f3e" stroke-width="4.9"/><path d="M162.9 50.6 Q168.5 57.9 172.9 66.3" stroke="#543a20" stroke-width="5.0"/><path d="M21.2 74.1 Q12.9 75.0 5.9 80.2" stroke="#9e6d3c" stroke-width="5.5"/><path d="M130.7 -3.3 Q139.6 12.4 155.2 7.4" stroke="#4b341d" stroke-width="4.2"/><path d="M161.6 19.4 Q152.4 26.1 142.1 22.0" stroke="#946639" stroke-width="3.3"/><path d="M89.5 89.3 Q75.6 84.1 62.8 92.1" stroke="#4c341d" stroke-width="5.0"/><path d="M161.7 84.8 Q154.4 98.2 140.7 98.9" stroke="#9e6d3d" stroke-width="4.1"/><path d="M46.1 67.1 Q55.5 65.6 59.6 75.5" stroke="#51371f" stroke-width="3.3"/><path d="M-11.3 -2.3 Q2.4 -6.4 11.4 6.1" stroke="#9d6c3c" stroke-width="4.4"/><path d="M57.1 -1.6 Q66.0 -5.2 72.9 2.2" stroke="#4c341d" stroke-width="4.2"/><path d="M90.8 78.8 Q92.0 89.6 85.1 97.2" stroke="#9b6b3b" stroke-width="4.1"/><path d="M163.5 86.0 Q170.0 99.6 183.4 97.6" stroke="#51381f" stroke-width="5.0"/><path d="M106.0 -2.9 Q109.0 15.1 124.3 20.2" stroke="#b27a44" stroke-width="3.9"/><path d="M139.4 65.2 Q141.7 74.9 145.0 84.2" stroke="#4c341d" stroke-width="3.1"/><path d="M1.2 84.4 Q3.5 94.8 6.6 105.0" stroke="#a77340" stroke-width="4.9"/><path d="M88.7 0.6 Q95.9 9.1 104.8 3.1" stroke="#4b331c" stroke-width="4.4"/></g></g><ellipse cx="54.5" cy="16.8" rx="21.8" ry="10.5" fill="#bb9260" opacity="0.8" filter="url(#fb7)"/><ellipse cx="112.7" cy="21.1" rx="18.2" ry="8.4" fill="#b58c58" opacity="0.7" filter="url(#fb7)"/><ellipse cx="154.5" cy="14.7" rx="14.5" ry="8.4" fill="#a88250" opacity="0.7" filter="url(#fb7)"/><ellipse cx="90.9" cy="37.9" rx="18.2" ry="8.4" fill="#5a3c1e" opacity="0.7" filter="url(#fb7)"/><ellipse cx="27.3" cy="42.1" rx="12.7" ry="12.6" fill="#5a3a1c" opacity="0.7" filter="url(#fb7)"/><ellipse cx="141.8" cy="42.1" rx="14.5" ry="8.4" fill="#5e3f22" opacity="0.7" filter="url(#fb7)"/><ellipse cx="5.5" cy="73.7" rx="9.1" ry="21.1" fill="#4e3218" filter="url(#fb7)"/><ellipse cx="178.2" cy="63.2" rx="7.3" ry="25.3" fill="#5a3a20" filter="url(#fb7)"/><ellipse cx="100.0" cy="65.3" rx="47.3" ry="9.5" fill="#bc8454" filter="url(#fb7)"/><ellipse cx="145.4" cy="126.4" rx="21.8" ry="42.1" fill="#b57c58" opacity="0.6" filter="url(#fb7)"/><ellipse cx="10.9" cy="109.5" rx="10.9" ry="27.4" fill="#e3a38a" filter="url(#fb7)"/><polygon points="-18.2,126.4 7.3,139.0 23.6,143.2 45.4,181.1 49.1,231.7 -18.2,231.7" fill="#9b9d9a" filter="url(#fb7)"/><polygon points="30.9,231.7 49.1,187.4 54.5,231.7" fill="#2f93e0" filter="url(#fb7)"/><polygon points="170.9,149.5 200.0,155.8 200.0,231.7 169.1,231.7" fill="#3396e2" filter="url(#fb7)"/><rect x="174.5" y="115.8" width="18.2" height="35.8" fill="#c2c6c6" filter="url(#fb7)"/><ellipse cx="118.2" cy="202.2" rx="45.4" ry="14.7" fill="#8f7c78" opacity="0.9" filter="url(#fb7)"/><ellipse cx="90.9" cy="181.1" rx="36.4" ry="10.5" fill="#c99670" opacity="0.8" filter="url(#fb7)"/><ellipse cx="61.8" cy="84.2" rx="20.5" ry="9.7" fill="#9a7068" opacity="0.25" filter="url(#fb7)" transform="rotate(5 61.8 84.2)"/><ellipse cx="61.8" cy="81.7" rx="14.3" ry="2.3" fill="#4a3020" opacity="0.7200000000000001" filter="url(#fs7)" transform="rotate(5 61.8 81.7)"/><ellipse cx="61.8" cy="83.0" rx="6.8" ry="4.0" fill="#4a3020" opacity="0.8" filter="url(#fs7)" transform="rotate(5 61.8 83.0)"/><ellipse cx="61.8" cy="71.6" rx="18.4" ry="2.7" fill="#7a5230" opacity="0.6" filter="url(#fs7)" transform="rotate(2.5 61.8 71.6)"/><ellipse cx="129.1" cy="81.1" rx="20.5" ry="8.7" fill="#9a7068" opacity="0.25" filter="url(#fb7)" transform="rotate(-3 129.1 81.1)"/><ellipse cx="129.1" cy="78.6" rx="14.3" ry="2.1" fill="#4a3020" opacity="0.7200000000000001" filter="url(#fs7)" transform="rotate(-3 129.1 78.6)"/><ellipse cx="129.1" cy="79.8" rx="6.8" ry="3.6" fill="#4a3020" opacity="0.8" filter="url(#fs7)" transform="rotate(-3 129.1 79.8)"/><ellipse cx="129.1" cy="69.5" rx="18.4" ry="2.7" fill="#7a5230" opacity="0.6" filter="url(#fs7)" transform="rotate(-1.5 129.1 69.5)"/><ellipse cx="96.4" cy="103.2" rx="2.7" ry="8.4" fill="#f6d6bc" opacity="0.9" filter="url(#fs7)"/><ellipse cx="103.6" cy="123.2" rx="16.4" ry="3.4" fill="#8a5238" opacity="0.6" filter="url(#fs7)"/><line x1="72.7" y1="142.2" x2="132.7" y2="137.9" stroke="#7c4238" stroke-width="2.5" stroke-linecap="round" opacity="0.9" filter="url(#fs7)"/><ellipse cx="103.6" cy="148.5" rx="23.6" ry="5.3" fill="#d48a80" opacity="0.9" filter="url(#fs7)"/></g></svg></div>
<div style="left:1214.00px;top:964.90px;width:32.00px;height:21.90px;background:rgba(60,48,48,.86);"></div>
<span class="t" style="left:1215.00px;top:968.00px;font-size:18px;color:#fcfcfc;font-weight:bold;-webkit-text-stroke-width:0;transform:scaleX(0.8567);transform-origin:0 0;">JPG</span>
<svg style="left:1123.90px;top:988.10px;" width="16" height="16" viewBox="0 0 16 16"><path d="M1.2 0 V16" stroke="#33373b" stroke-width="1.1"/><path d="M1.8 0.8 L6 1.6 L5.6 3.4 L15 6.2 L5 9.2 L1.8 8.6 Z" fill="#2ea667"/></svg>
<span class="t" style="left:1121.60px;top:1017.00px;font-size:18.5px;color:#232629;letter-spacing:-0.064px;">2024.06.12-Maui Day 5 ...</span>
<span class="t" style="left:1179.65px;top:1084.00px;font-size:14px;color:#232629;letter-spacing:-0.070px;">6/12/24 3:45 PM</span>
<span class="t" style="left:1180.85px;top:1102.00px;font-size:16.2px;color:#2980b9;letter-spacing:-0.061px;font-style:italic;">Adam, person</span>
<div style="left:1365.00px;top:764.90px;width:235.40px;height:367.40px;border:1.2px solid #f6f6f6;box-sizing:border-box;"></div>
<div style="left:1391.40px;top:772.40px;width:182.30px;height:219.20px;background:linear-gradient(#c6c6c6,#a8a8a8 4px,#a8a8a8 calc(100% - 3px),#bcbcbc);box-shadow:0 0 2px rgba(0,0,0,.3);"></div>
<div style="left:1393.60px;top:775.80px;width:177.90px;height:213.00px;background:#0c0c0c;"></div>
<div style="left:1394.80px;top:777.00px;width:175.50px;height:210.60px;overflow:hidden;"><svg width="175.5" height="210.6" viewBox="0 0 175.5 210.6" style="left:0;top:0"><defs><filter id="fb8" x="-30%" y="-30%" width="160%" height="160%"><feGaussianBlur stdDeviation="4"/></filter><filter id="fs8" x="-30%" y="-30%" width="160%" height="160%"><feGaussianBlur stdDeviation="1.8"/></filter><filter id="fx8" x="-40%" y="-40%" width="180%" height="180%"><feGaussianBlur stdDeviation="7.6"/></filter><clipPath id="fc8"><rect width="175.5" height="210.6"/></clipPath></defs><g clip-path="url(#fc8)"><rect width="175.5" height="210.6" fill="#e2b19b"/><rect x="-17.6" y="-21.1" width="28.1" height="210.6" fill="#4a5a58" filter="url(#fb8)"/><rect x="165.0" y="-21.1" width="28.1" height="210.6" fill="#4a5a58" filter="url(#fb8)"/><ellipse cx="79.0" cy="126.4" rx="43.9" ry="42.1" fill="#ebbfab" filter="url(#fx8)"/><polygon points="0.0,0.0 17.6,-21.1 166.7,-21.1 179.0,42.1 175.5,96.9 158.0,88.5 150.9,63.2 122.8,61.1 87.8,42.1 61.4,42.1 35.1,63.2 22.8,88.5 5.3,88.5" fill="#8a5f42" filter="url(#fb8)"/><clipPath id="fh8_17"><polygon points="0.0,0.0 17.6,-21.1 166.7,-21.1 179.0,42.1 175.5,96.9 158.0,88.5 150.9,63.2 122.8,61.1 87.8,42.1 61.4,42.1 35.1,63.2 22.8,88.5 5.3,88.5"/></clipPath><g clip-path="url(#fh8_17)"><g filter="url(#fs8)" fill="none" stroke-linecap="round" opacity="0.75"><path d="M103.6 68.2 Q88.9 73.4 79.6 88.1" stroke="#bf845b" stroke-width="4.2"/><path d="M14.3 -21.9 Q19.3 2.6 24.4 27.1" stroke="#513726" stroke-width="3.4"/><path d="M143.5 62.7 Q136.5 94.6 153.6 120.4" stroke="#a6724f" stroke-width="4.7"/><path d="M29.4 39.8 Q25.0 68.1 23.5 96.9" stroke="#503726" stroke-width="4.7"/><path d="M93.9 11.7 Q100.0 47.3 130.3 48.2" stroke="#b57c56" stroke-width="3.0"/><path d="M150.8 70.6 Q147.5 85.9 134.2 87.0" stroke="#533927" stroke-width="4.4"/><path d="M56.7 68.1 Q70.9 90.2 67.8 117.8" stroke="#c3865d" stroke-width="4.0"/><path d="M163.9 34.6 Q174.7 48.6 172.2 67.4" stroke="#5a3e2b" stroke-width="4.1"/><path d="M83.6 36.7 Q101.6 48.8 111.4 70.6" stroke="#c5875e" stroke-width="3.5"/><path d="M154.6 44.7 Q161.8 54.6 164.4 67.4" stroke="#593d2a" stroke-width="3.8"/><path d="M54.7 45.5 Q37.5 54.9 41.0 77.2" stroke="#a6724f" stroke-width="4.8"/><path d="M9.8 36.7 Q-7.4 49.2 -2.5 72.6" stroke="#593d2a" stroke-width="4.1"/><path d="M62.4 5.8 Q73.8 15.5 75.0 32.1" stroke="#a77350" stroke-width="4.7"/><path d="M111.1 61.2 Q84.7 64.2 77.3 94.7" stroke="#4d3525" stroke-width="2.9"/><path d="M140.5 62.9 Q145.5 85.5 130.1 99.7" stroke="#a6724f" stroke-width="4.2"/><path d="M36.4 38.0 Q38.4 54.2 48.5 65.1" stroke="#523827" stroke-width="3.8"/><path d="M70.9 25.9 Q55.7 45.3 66.9 68.3" stroke="#b47c56" stroke-width="4.4"/><path d="M30.7 15.9 Q35.3 35.3 49.7 45.8" stroke="#4d3525" stroke-width="4.0"/><path d="M67.6 65.6 Q72.6 87.3 80.7 107.5" stroke="#c5885e" stroke-width="4.1"/><path d="M72.1 81.4 Q62.7 95.4 57.1 112.0" stroke="#533927" stroke-width="3.9"/><path d="M95.1 -5.6 Q93.5 18.9 88.6 42.8" stroke="#bf845b" stroke-width="3.7"/><path d="M87.9 39.1 Q80.2 52.5 89.1 64.8" stroke="#513826" stroke-width="4.6"/><path d="M73.9 58.8 Q78.3 76.0 90.1 86.9" stroke="#b67d57" stroke-width="2.8"/><path d="M88.5 59.2 Q67.2 83.3 77.1 116.3" stroke="#4e3625" stroke-width="4.6"/><path d="M11.6 38.0 Q-2.0 47.2 -2.5 66.0" stroke="#bb8159" stroke-width="4.5"/><path d="M76.2 -10.1 Q80.0 6.1 74.1 21.4" stroke="#563b29" stroke-width="3.5"/><path d="M109.0 68.8 Q91.9 72.9 81.8 90.0" stroke="#a4714e" stroke-width="3.5"/><path d="M115.7 66.5 Q136.3 74.6 150.2 94.4" stroke="#513827" stroke-width="3.5"/><path d="M94.3 6.2 Q100.3 23.5 94.7 41.0" stroke="#a87350" stroke-width="4.3"/><path d="M50.7 3.8 Q48.5 21.5 58.3 35.0" stroke="#5d402c" stroke-width="3.1"/><path d="M52.5 23.1 Q44.9 41.8 50.6 61.4" stroke="#b77d57" stroke-width="3.1"/><path d="M99.2 -2.0 Q89.0 15.1 97.1 33.9" stroke="#5a3e2b" stroke-width="4.9"/><path d="M58.3 40.8 Q73.3 57.9 84.6 78.7" stroke="#c0845b" stroke-width="3.4"/><path d="M141.6 58.5 Q137.8 76.8 124.5 86.9" stroke="#513726" stroke-width="3.1"/><path d="M1.0 -8.0 Q4.5 11.8 1.5 31.7" stroke="#c4875d" stroke-width="3.1"/><path d="M156.4 -17.0 Q148.5 13.3 170.4 31.1" stroke="#523827" stroke-width="4.4"/><path d="M67.8 70.1 Q61.2 94.1 40.4 97.2" stroke="#a97450" stroke-width="4.6"/><path d="M167.6 41.5 Q164.2 69.8 144.1 85.2" stroke="#513726" stroke-width="4.7"/><path d="M141.9 29.9 Q140.5 46.5 152.7 54.6" stroke="#b27b55" stroke-width="3.2"/><path d="M57.1 -10.1 Q55.6 3.4 53.8 16.9" stroke="#583c2a" stroke-width="3.7"/></g></g><ellipse cx="52.6" cy="21.1" rx="26.3" ry="10.5" fill="#ad7f5c" opacity="0.8" filter="url(#fb8)"/><ellipse cx="122.8" cy="25.3" rx="26.3" ry="10.5" fill="#a2744f" opacity="0.7" filter="url(#fb8)"/><ellipse cx="96.5" cy="50.5" rx="12.3" ry="10.5" fill="#5e3b28" opacity="0.7" filter="url(#fb8)"/><ellipse cx="147.4" cy="46.3" rx="12.3" ry="14.7" fill="#603e2a" opacity="0.7" filter="url(#fb8)"/><ellipse cx="43.9" cy="46.3" rx="8.8" ry="10.5" fill="#6a4530" opacity="0.6" filter="url(#fb8)"/><ellipse cx="8.8" cy="109.5" rx="8.8" ry="27.4" fill="#d9a088" filter="url(#fb8)"/><ellipse cx="165.8" cy="123.2" rx="5.3" ry="23.2" fill="#d69a84" filter="url(#fb8)"/><line x1="-8.8" y1="154.8" x2="22.8" y2="154.8" stroke="#cfd6d4" stroke-width="2.1" stroke-linecap="round" opacity="0.9" filter="url(#fs8)"/><line x1="158.0" y1="150.6" x2="184.3" y2="150.6" stroke="#cfd6d4" stroke-width="2.1" stroke-linecap="round" opacity="0.9" filter="url(#fs8)"/><polygon points="-17.6,160.1 22.8,170.6 39.5,193.8 66.7,231.7 -17.6,231.7" fill="#121216" filter="url(#fb8)"/><polygon points="193.1,162.2 152.7,166.4 134.3,191.6 112.3,231.7 193.1,231.7" fill="#121216" filter="url(#fb8)"/><ellipse cx="52.6" cy="132.7" rx="17.6" ry="14.7" fill="#e3a696" opacity="0.6" filter="url(#fb8)"/><ellipse cx="136.9" cy="136.9" rx="17.6" ry="14.7" fill="#e3a696" opacity="0.6" filter="url(#fb8)"/><ellipse cx="64.9" cy="94.3" rx="17.1" ry="8.2" fill="#9a7068" opacity="0.25" filter="url(#fb8)" transform="rotate(5 64.9 94.3)"/><ellipse cx="64.9" cy="91.8" rx="12.0" ry="2.0" fill="#54453f" opacity="0.675" filter="url(#fs8)" transform="rotate(5 64.9 91.8)"/><ellipse cx="64.9" cy="93.1" rx="5.7" ry="3.4" fill="#54453f" opacity="0.75" filter="url(#fs8)" transform="rotate(5 64.9 93.1)"/><ellipse cx="64.9" cy="81.1" rx="15.4" ry="2.7" fill="#a27a60" opacity="0.6" filter="url(#fs8)" transform="rotate(2.5 64.9 81.1)"/><ellipse cx="129.0" cy="96.5" rx="17.1" ry="8.2" fill="#9a7068" opacity="0.25" filter="url(#fb8)" transform="rotate(-5 129.0 96.5)"/><ellipse cx="129.0" cy="93.9" rx="12.0" ry="2.0" fill="#54453f" opacity="0.675" filter="url(#fs8)" transform="rotate(-5 129.0 93.9)"/><ellipse cx="129.0" cy="95.2" rx="5.7" ry="3.4" fill="#54453f" opacity="0.75" filter="url(#fs8)" transform="rotate(-5 129.0 95.2)"/><ellipse cx="129.0" cy="83.2" rx="15.4" ry="2.7" fill="#a27a60" opacity="0.6" filter="url(#fs8)" transform="rotate(-2.5 129.0 83.2)"/><ellipse cx="96.5" cy="126.4" rx="14.0" ry="10.5" fill="#dba18c" opacity="0.8" filter="url(#fb8)"/><ellipse cx="87.8" cy="131.6" rx="3.5" ry="2.1" fill="#9a6456" opacity="0.7" filter="url(#fs8)"/><ellipse cx="107.1" cy="131.6" rx="3.5" ry="2.1" fill="#9a6456" opacity="0.7" filter="url(#fs8)"/><ellipse cx="94.8" cy="149.9" rx="28.1" ry="2.7" fill="#b06a68" opacity="0.9" filter="url(#fs8)"/><ellipse cx="94.8" cy="155.8" rx="17.6" ry="3.8" fill="#dc9c94" opacity="0.8" filter="url(#fs8)"/></g></svg></div>
<div style="left:1466.55px;top:964.90px;width:32.00px;height:21.90px;background:rgba(60,48,48,.86);"></div>
<span class="t" style="left:1467.55px;top:968.00px;font-size:18px;color:#fcfcfc;font-weight:bold;-webkit-text-stroke-width:0;transform:scaleX(0.8567);transform-origin:0 0;">JPG</span>
<svg style="left:1375.90px;top:988.10px;" width="16" height="16" viewBox="0 0 16 16"><path d="M1.2 0 V16" stroke="#33373b" stroke-width="1.1"/><path d="M1.8 0.8 L6 1.6 L5.6 3.4 L15 6.2 L5 9.2 L1.8 8.6 Z" fill="#f0b90f"/></svg>
<span class="t" style="left:1387.35px;top:1017.00px;font-size:18.5px;color:#232629;letter-spacing:-0.065px;">20220614_200609.jpg</span>
<span class="t" style="left:1431.65px;top:1084.00px;font-size:14px;color:#232629;letter-spacing:-0.070px;">6/14/22 8:06 PM</span>
<span class="t" style="left:1432.85px;top:1102.00px;font-size:16.2px;color:#2980b9;letter-spacing:-0.061px;font-style:italic;">Adam, person</span>
<div style="left:1617.00px;top:764.90px;width:235.40px;height:367.40px;border:1.2px solid #f6f6f6;box-sizing:border-box;"></div>
<div style="left:1643.50px;top:772.40px;width:181.00px;height:219.20px;background:linear-gradient(#c6c6c6,#a8a8a8 4px,#a8a8a8 calc(100% - 3px),#bcbcbc);box-shadow:0 0 2px rgba(0,0,0,.3);"></div>
<div style="left:1645.70px;top:775.80px;width:176.60px;height:213.00px;background:#0c0c0c;"></div>
<div style="left:1646.90px;top:777.00px;width:174.20px;height:210.60px;overflow:hidden;"><svg width="174.2" height="210.6" viewBox="0 0 174.2 210.6" style="left:0;top:0"><defs><filter id="fb9" x="-30%" y="-30%" width="160%" height="160%"><feGaussianBlur stdDeviation="4"/></filter><filter id="fs9" x="-30%" y="-30%" width="160%" height="160%"><feGaussianBlur stdDeviation="1.8"/></filter><filter id="fx9" x="-40%" y="-40%" width="180%" height="180%"><feGaussianBlur stdDeviation="7.6"/></filter><clipPath id="fc9"><rect width="174.2" height="210.6"/></clipPath></defs><g clip-path="url(#fc9)"><rect width="174.2" height="210.6" fill="#d2dae0"/><polygon points="13.9,-21.1 52.3,-21.1 48.8,42.1 17.4,63.2" fill="#aab5bd" filter="url(#fb9)"/><line x1="25.3" y1="-4.2" x2="26.1" y2="21.1" stroke="#2a3038" stroke-width="4.4" stroke-linecap="round" opacity="0.8" filter="url(#fs9)"/><line x1="42.7" y1="-4.2" x2="43.5" y2="37.9" stroke="#2a3038" stroke-width="5.2" stroke-linecap="round" opacity="0.85" filter="url(#fs9)"/><line x1="69.7" y1="12.6" x2="57.5" y2="37.9" stroke="#2a3038" stroke-width="6.1" stroke-linecap="round" opacity="0.85" filter="url(#fs9)"/><rect x="156.8" y="-21.1" width="34.8" height="80.0" fill="#a2aab2" filter="url(#fb9)"/><polygon points="20.9,59.0 55.7,42.1 52.3,67.4 17.4,80.0" fill="#5a4a44" opacity="0.8" filter="url(#fb9)"/><ellipse cx="95.8" cy="147.4" rx="62.7" ry="56.9" fill="#d8b4ac" filter="url(#fb9)"/><polygon points="116.7,63.2 156.8,71.6 170.7,105.3 165.5,126.4 148.1,117.9 130.6,94.8" fill="#7a5a48" filter="url(#fb9)"/><clipPath id="fh9_18"><polygon points="116.7,63.2 156.8,71.6 170.7,105.3 165.5,126.4 148.1,117.9 130.6,94.8"/></clipPath><g clip-path="url(#fh9_18)"><g filter="url(#fs9)" fill="none" stroke-linecap="round" opacity="0.6"><path d="M121.8 97.3 Q126.6 104.9 131.2 112.7" stroke="#a0765e" stroke-width="4.3"/><path d="M133.0 69.5 Q139.1 82.8 149.9 90.3" stroke="#48352b" stroke-width="5.1"/><path d="M157.5 116.0 Q162.8 123.7 169.5 129.7" stroke="#a87c63" stroke-width="3.6"/><path d="M155.2 108.9 Q159.5 120.2 151.4 127.8" stroke="#48352a" stroke-width="5.6"/><path d="M125.5 96.1 Q123.0 111.1 131.8 122.2" stroke="#a1775f" stroke-width="4.6"/><path d="M127.8 54.8 Q129.3 72.3 138.4 86.1" stroke="#463329" stroke-width="4.7"/><path d="M125.1 64.3 Q125.7 76.2 125.6 88.2" stroke="#9e745d" stroke-width="3.3"/><path d="M152.2 89.8 Q150.2 102.0 157.4 110.9" stroke="#503b2f" stroke-width="4.5"/><path d="M115.8 67.7 Q121.2 73.0 127.2 77.4" stroke="#a57a61" stroke-width="3.6"/></g></g><ellipse cx="69.7" cy="69.5" rx="69.7" ry="31.6" fill="#d0a89c" filter="url(#fb9)" transform="rotate(-14 69.7 69.5)"/><ellipse cx="52.3" cy="94.8" rx="52.3" ry="19.0" fill="#e3bcae" filter="url(#fb9)" transform="rotate(-5 52.3 94.8)"/><ellipse cx="95.8" cy="33.7" rx="38.3" ry="9.5" fill="#e0b0a4" filter="url(#fb9)" transform="rotate(-8 95.8 33.7)"/><ellipse cx="78.4" cy="52.6" rx="17.4" ry="8.4" fill="#f0d0c0" opacity="0.8" filter="url(#fb9)"/><polygon points="83.6,75.8 108.0,59.0 121.9,75.8 115.0,77.9 87.1,77.9" fill="#6a5050" filter="url(#fb9)"/><polygon points="106.3,37.9 121.9,37.9 121.9,71.6 108.0,71.6" fill="#3a3030" filter="url(#fs9)"/><polygon points="115.0,42.1 139.4,42.1 139.4,57.9 115.0,57.9" fill="#e2e2dc" filter="url(#fs9)"/><polygon points="139.4,42.1 162.0,42.1 162.0,65.3 139.4,65.3" fill="#2a3848" filter="url(#fs9)"/><ellipse cx="26.1" cy="134.8" rx="12.2" ry="14.7" fill="#c9988c" filter="url(#fb9)"/><ellipse cx="3.5" cy="120.0" rx="6.1" ry="5.3" fill="#3040b0" filter="url(#fs9)"/><polygon points="-17.4,147.4 26.1,154.8 51.4,186.4 66.2,231.7 -17.4,231.7" fill="#1c2a4a" filter="url(#fb9)"/><polygon points="191.6,130.6 158.5,153.7 142.0,186.4 111.5,231.7 191.6,231.7" fill="#d7dfe4" filter="url(#fb9)"/><ellipse cx="95.8" cy="195.9" rx="26.1" ry="14.7" fill="#b89a98" opacity="0.8" filter="url(#fb9)"/><line x1="130.6" y1="111.6" x2="149.8" y2="120.0" stroke="#5a3a40" stroke-width="2.4" stroke-linecap="round" opacity="0.8" filter="url(#fs9)"/><ellipse cx="121.9" cy="122.1" rx="8.7" ry="5.3" fill="#b08080" opacity="0.7" filter="url(#fs9)"/><ellipse cx="115.0" cy="147.4" rx="14.8" ry="5.9" fill="#9c5560" opacity="0.9" filter="url(#fs9)" transform="rotate(8 115.0 147.4)"/><ellipse cx="118.5" cy="145.3" rx="8.7" ry="2.5" fill="#e8c8c0" opacity="0.8" filter="url(#fs9)" transform="rotate(8 118.5 145.3)"/></g></svg></div>
<div style="left:1718.00px;top:964.90px;width:32.00px;height:21.90px;background:rgba(60,48,48,.86);"></div>
<span class="t" style="left:1719.00px;top:968.00px;font-size:18px;color:#fcfcfc;font-weight:bold;-webkit-text-stroke-width:0;transform:scaleX(0.8567);transform-origin:0 0;">JPG</span>
<svg style="left:1627.90px;top:988.10px;" width="16" height="16" viewBox="0 0 16 16"><path d="M1.2 0 V16" stroke="#33373b" stroke-width="1.1"/><path d="M1.8 0.8 L6 1.6 L5.6 3.4 L15 6.2 L5 9.2 L1.8 8.6 Z" fill="#f0b90f"/></svg>
<span class="t" style="left:1639.35px;top:1017.00px;font-size:18.5px;color:#232629;letter-spacing:-0.065px;">20220616_102430.jpg</span>
<span class="t" style="left:1679.45px;top:1084.00px;font-size:14px;color:#232629;letter-spacing:-0.024px;">6/16/22 10:24 AM</span>
<span class="t" style="left:1714.35px;top:1102.00px;font-size:16.2px;color:#2980b9;letter-spacing:-0.234px;font-style:italic;">Adam</span>
<div style="left:1869.00px;top:764.90px;width:235.40px;height:367.40px;border:1.2px solid #f6f6f6;box-sizing:border-box;"></div>
<div style="left:1891.70px;top:772.40px;width:188.90px;height:219.20px;background:linear-gradient(#c6c6c6,#a8a8a8 4px,#a8a8a8 calc(100% - 3px),#bcbcbc);box-shadow:0 0 2px rgba(0,0,0,.3);"></div>
<div style="left:1893.90px;top:775.80px;width:184.50px;height:213.00px;background:#0c0c0c;"></div>
<div style="left:1895.10px;top:777.00px;width:182.10px;height:210.60px;overflow:hidden;"><svg width="182.1" height="210.6" viewBox="0 0 182.1 210.6" style="left:0;top:0"><defs><filter id="fb10" x="-30%" y="-30%" width="160%" height="160%"><feGaussianBlur stdDeviation="4.5"/></filter><filter id="fs10" x="-30%" y="-30%" width="160%" height="160%"><feGaussianBlur stdDeviation="2.0"/></filter><filter id="fx10" x="-40%" y="-40%" width="180%" height="180%"><feGaussianBlur stdDeviation="8.5"/></filter><clipPath id="fc10"><rect width="182.1" height="210.6"/></clipPath></defs><g clip-path="url(#fc10)"><rect width="182.1" height="210.6" fill="#dca69b"/><ellipse cx="81.9" cy="115.8" rx="45.5" ry="37.9" fill="#ebbab0" filter="url(#fx10)"/><polygon points="-18.2,-21.1 200.3,-21.1 200.3,115.8 173.0,105.3 163.9,69.5 127.5,63.2 100.2,67.4 72.8,52.6 40.1,52.6 23.7,75.8 -18.2,84.2" fill="#663e32" filter="url(#fb10)"/><clipPath id="fh10_19"><polygon points="-18.2,-21.1 200.3,-21.1 200.3,115.8 173.0,105.3 163.9,69.5 127.5,63.2 100.2,67.4 72.8,52.6 40.1,52.6 23.7,75.8 -18.2,84.2"/></clipPath><g clip-path="url(#fh10_19)"><g filter="url(#fs10)" fill="none" stroke-linecap="round" opacity="0.6"><path d="M124.3 72.9 Q110.9 90.0 122.3 108.9" stroke="#835040" stroke-width="4.8"/><path d="M17.9 19.0 Q33.1 23.6 36.1 41.5" stroke="#3c241d" stroke-width="4.9"/><path d="M48.5 59.0 Q56.2 66.6 64.8 72.9" stroke="#7e4c3e" stroke-width="5.1"/><path d="M130.8 81.3 Q129.4 94.3 136.4 104.7" stroke="#422820" stroke-width="5.1"/><path d="M138.8 28.6 Q116.1 18.8 101.0 40.6" stroke="#8e5645" stroke-width="4.6"/><path d="M110.8 75.2 Q97.6 82.0 87.8 94.3" stroke="#3a231c" stroke-width="4.2"/><path d="M126.3 -16.6 Q128.9 0.7 130.6 18.2" stroke="#7c4b3c" stroke-width="5.5"/><path d="M85.8 94.2 Q73.5 120.1 48.7 113.4" stroke="#3c241d" stroke-width="5.1"/><path d="M13.3 72.4 Q21.9 80.4 28.1 90.9" stroke="#804e3f" stroke-width="6.2"/><path d="M89.2 25.2 Q81.4 33.1 78.7 44.6" stroke="#3b241d" stroke-width="6.3"/><path d="M18.8 -12.4 Q20.2 7.7 18.1 27.8" stroke="#79493b" stroke-width="4.7"/><path d="M6.1 6.2 Q13.2 21.9 24.9 33.5" stroke="#3a231c" stroke-width="6.7"/><path d="M132.3 -9.8 Q127.4 9.5 116.8 25.6" stroke="#79493b" stroke-width="6.0"/><path d="M176.6 88.9 Q180.5 109.5 169.4 126.3" stroke="#452921" stroke-width="5.5"/><path d="M16.7 77.5 Q10.8 89.5 5.7 101.9" stroke="#7e4c3e" stroke-width="6.3"/><path d="M25.2 23.0 Q20.2 37.3 24.2 51.9" stroke="#442921" stroke-width="7.0"/><path d="M107.0 64.9 Q117.1 78.5 126.4 93.0" stroke="#845041" stroke-width="4.0"/><path d="M152.0 -6.0 Q142.6 19.7 157.4 41.7" stroke="#3f261f" stroke-width="4.7"/><path d="M77.7 30.3 Q78.6 48.5 92.3 57.6" stroke="#855041" stroke-width="7.0"/><path d="M18.5 60.7 Q20.4 77.7 15.9 93.9" stroke="#39221c" stroke-width="4.9"/><path d="M61.6 55.1 Q57.8 73.4 72.1 82.4" stroke="#804e3f" stroke-width="5.1"/><path d="M185.1 2.9 Q176.8 19.0 169.2 35.4" stroke="#412820" stroke-width="6.7"/><path d="M116.2 -11.0 Q101.8 1.5 97.8 21.8" stroke="#7f4d3e" stroke-width="6.6"/><path d="M40.3 2.1 Q59.4 9.1 60.7 32.3" stroke="#3e261e" stroke-width="5.3"/><path d="M91.2 47.3 Q106.2 63.3 108.1 86.7" stroke="#8b5444" stroke-width="5.0"/><path d="M166.4 10.7 Q162.4 26.8 170.6 40.5" stroke="#40271f" stroke-width="4.2"/><path d="M20.1 0.4 Q30.3 19.4 49.2 14.4" stroke="#865141" stroke-width="5.3"/><path d="M85.7 -6.8 Q91.7 8.4 105.6 12.9" stroke="#3b241d" stroke-width="5.2"/><path d="M14.6 55.6 Q28.4 54.0 35.0 68.2" stroke="#895343" stroke-width="6.3"/><path d="M90.9 -13.5 Q70.0 0.5 68.9 28.4" stroke="#422820" stroke-width="6.9"/><path d="M59.2 44.4 Q50.7 57.7 39.7 68.3" stroke="#935948" stroke-width="3.9"/><path d="M0.5 48.3 Q16.6 62.9 34.1 50.6" stroke="#452a22" stroke-width="7.1"/><path d="M25.0 15.6 Q48.5 4.8 65.7 26.2" stroke="#794a3b" stroke-width="6.0"/><path d="M163.0 59.7 Q172.0 65.2 182.1 64.1" stroke="#432820" stroke-width="4.8"/></g></g><ellipse cx="18.2" cy="31.6" rx="21.9" ry="31.6" fill="#8c6a58" opacity="0.8" filter="url(#fb10)"/><ellipse cx="118.4" cy="21.1" rx="45.5" ry="16.8" fill="#4c2c26" opacity="0.7" filter="url(#fb10)"/><ellipse cx="100.2" cy="56.9" rx="21.9" ry="8.4" fill="#4e2e26" opacity="0.7" filter="url(#fb10)"/><ellipse cx="154.8" cy="52.6" rx="18.2" ry="12.6" fill="#b07a60" opacity="0.5" filter="url(#fb10)"/><ellipse cx="58.3" cy="63.2" rx="23.7" ry="8.4" fill="#d09a8a" filter="url(#fb10)"/><ellipse cx="6.4" cy="105.3" rx="7.3" ry="27.4" fill="#d8a090" filter="url(#fb10)"/><polygon points="-18.2,130.6 14.6,132.7 20.0,179.0 -18.2,181.1" fill="#2a5060" filter="url(#fb10)"/><polygon points="-18.2,179.0 16.4,178.0 21.9,193.8 -18.2,198.0" fill="#3a8ad8" filter="url(#fb10)"/><polygon points="-18.2,193.8 36.4,185.3 54.6,231.7 -18.2,231.7" fill="#dcb4ac" filter="url(#fb10)"/><polygon points="165.7,126.4 200.3,126.4 200.3,176.9 169.4,176.9" fill="#6a6040" filter="url(#fb10)"/><line x1="149.3" y1="176.9" x2="185.7" y2="171.6" stroke="#b06a30" stroke-width="5.5" stroke-linecap="round" opacity="0.9" filter="url(#fs10)"/><polygon points="135.7,184.3 200.3,176.9 200.3,231.7 132.9,231.7" fill="#2f8fe0" filter="url(#fb10)"/><ellipse cx="91.1" cy="200.1" rx="40.1" ry="12.6" fill="#c4908a" opacity="0.8" filter="url(#fb10)"/><ellipse cx="176.6" cy="115.8" rx="5.5" ry="16.8" fill="#d09a8a" opacity="0.8" filter="url(#fb10)"/><ellipse cx="52.8" cy="84.2" rx="23.2" ry="8.7" fill="#9a7068" opacity="0.25" filter="url(#fb10)" transform="rotate(4 52.8 84.2)"/><ellipse cx="52.8" cy="81.7" rx="16.3" ry="2.1" fill="#5a3530" opacity="0.675" filter="url(#fs10)" transform="rotate(4 52.8 81.7)"/><ellipse cx="52.8" cy="83.0" rx="7.7" ry="3.6" fill="#5a3530" opacity="0.75" filter="url(#fs10)" transform="rotate(4 52.8 83.0)"/><ellipse cx="52.8" cy="70.6" rx="20.9" ry="2.7" fill="#9a5a48" opacity="0.6" filter="url(#fs10)" transform="rotate(2.0 52.8 70.6)"/><ellipse cx="132.9" cy="85.9" rx="23.2" ry="8.7" fill="#9a7068" opacity="0.25" filter="url(#fb10)" transform="rotate(-3 132.9 85.9)"/><ellipse cx="132.9" cy="83.4" rx="16.3" ry="2.1" fill="#5a3530" opacity="0.675" filter="url(#fs10)" transform="rotate(-3 132.9 83.4)"/><ellipse cx="132.9" cy="84.7" rx="7.7" ry="3.6" fill="#5a3530" opacity="0.75" filter="url(#fs10)" transform="rotate(-3 132.9 84.7)"/><ellipse cx="132.9" cy="71.6" rx="20.9" ry="2.7" fill="#9a5a48" opacity="0.6" filter="url(#fs10)" transform="rotate(-1.5 132.9 71.6)"/><ellipse cx="94.7" cy="120.0" rx="12.7" ry="12.6" fill="#d4968e" opacity="0.7" filter="url(#fb10)"/><ellipse cx="85.6" cy="125.3" rx="3.6" ry="2.5" fill="#9a5a5a" opacity="0.7" filter="url(#fs10)"/><ellipse cx="107.4" cy="125.3" rx="3.6" ry="2.5" fill="#9a5a5a" opacity="0.7" filter="url(#fs10)"/><ellipse cx="94.7" cy="143.8" rx="31.0" ry="2.9" fill="#ac5c6c" opacity="0.9" filter="url(#fs10)"/><ellipse cx="94.7" cy="154.8" rx="20.0" ry="6.3" fill="#d08a88" opacity="0.7" filter="url(#fs10)"/></g></svg></div>
<div style="left:1970.15px;top:964.90px;width:32.00px;height:21.90px;background:rgba(60,48,48,.86);"></div>
<span class="t" style="left:1971.15px;top:968.00px;font-size:18px;color:#fcfcfc;font-weight:bold;-webkit-text-stroke-width:0;transform:scaleX(0.8567);transform-origin:0 0;">JPG</span>
<svg style="left:1879.90px;top:988.10px;" width="16" height="16" viewBox="0 0 16 16"><path d="M1.2 0 V16" stroke="#33373b" stroke-width="1.1"/><path d="M1.8 0.8 L6 1.6 L5.6 3.4 L15 6.2 L5 9.2 L1.8 8.6 Z" fill="#f0b90f"/></svg>
<span class="t" style="left:1891.35px;top:1017.00px;font-size:18.5px;color:#232629;letter-spacing:-0.065px;">20240612_130518.jpg</span>
<span class="t" style="left:1935.65px;top:1084.00px;font-size:14px;color:#232629;letter-spacing:-0.070px;">6/12/24 1:05 PM</span>
<span class="t" style="left:1936.85px;top:1102.00px;font-size:16.2px;color:#2980b9;letter-spacing:-0.061px;font-style:italic;">Adam, person</span>
<svg style="left:2067.40px;top:773.20px;" width="22" height="22" viewBox="0 0 22 22"><circle cx="11" cy="11" r="10.5" fill="#d9d4d2" opacity=".85"/><g transform="translate(3.4 3.4) scale(.633)"><circle cx="12" cy="12" r="11.1" fill="none" stroke="#33373b" stroke-width="1.7"/><path d="M1.9 6.6 L4.6 3.9 L9.2 2 L10.5 3.9 L8.1 5.2 L4.4 8.2 L2.5 7.1 Z" fill="#33373b"/><path d="M4.9 12 Q6.5 11.3 8.1 11.7 L12.4 14.7 L11.9 16.5 L9.2 21.1 L7.6 21.6 L7.05 17.4 L4.9 15.2 Z" fill="#33373b"/><path d="M15.9 6.05 L20 5.8 L21.6 7.7 L23 8.2 Q23.6 12 22.5 16 L20 19.2 L19.7 14.7 L18.9 12.5 L15.9 12.2 L14.6 10.9 L14.6 9 L16.5 7.7 Z" fill="#33373b"/></g></svg>
<svg style="left:1973.40px;top:991.70px;" width="24" height="22" viewBox="0 0 24 22"><g transform="scale(1.09 1)"><path d="M11 0.8 L13.9 8 L21.4 8.5 L15.6 13.4 L17.5 20.9 L11 16.8 L4.5 20.9 L6.4 13.4 L0.6 8.5 L8.1 8 Z" fill="#2980b9" stroke="#1d3b53" stroke-width="1.2"/></g></svg>
</div>
<div class="g" id="rightbar">
<div style="left:2293.70px;top:205.20px;width:54.60px;height:1112.20px;background:#eff0f1;"></div>
<div class="r" style="left:2313.60px;top:260.60px;transform:rotate(90deg);"><span class="t" style="left:-1.00px;top:-15.66px;font-size:18.5px;color:#232629;letter-spacing:0.248px;">Properties</span></div>
<svg style="left:2312.20px;top:224.00px;" width="16.6" height="16.6" viewBox="0 0 16 16"><path d="M0.8 3.4 H16 M4.6 14 H16" stroke="#2d3136" stroke-width="1.1"/><circle cx="8.9" cy="3.4" r="2.3" fill="#2d3136"/><circle cx="3.1" cy="14" r="1.8" fill="none" stroke="#2d3136" stroke-width="1.1"/></svg>
<div class="r" style="left:2313.60px;top:411.50px;transform:rotate(90deg);"><span class="t" style="left:-1.00px;top:-15.66px;font-size:18.5px;color:#232629;letter-spacing:0.265px;">Metadata</span></div>
<svg style="left:2312.20px;top:376.00px;" width="16.6" height="16.6" viewBox="0 0 16 16"><path d="M5 3 L0.8 8 L5 13 M11 3 L15.2 8 L11 13" fill="none" stroke="#2d3136" stroke-width="1.2"/><path d="M9.6 1.5 L6.4 14.5" stroke="#2d3136" stroke-width="1.2"/></svg>
<div class="r" style="left:2313.60px;top:555.80px;transform:rotate(90deg);"><span class="t" style="left:0.00px;top:-15.66px;font-size:18.5px;color:#232629;letter-spacing:-0.382px;">Colors</span></div>
<svg style="left:2312.20px;top:519.30px;" width="16.6" height="16.6" viewBox="0 0 16 16"><path d="M1 8.5 L7.5 2 L13.5 8 L7.5 14.5 Z" fill="#2d3136"/><path d="M4.2 5.2 L7.4 2.2 L10.4 5.2 Z" fill="#eff0f1"/><path d="M7 0.5 Q9.5 1 9.3 4" fill="none" stroke="#2d3136" stroke-width="1.1"/><path d="M14.6 10.2 Q16 12.6 14.6 13.2 Q13.2 12.6 14.6 10.2 Z" fill="#2d3136"/></svg>
<div class="r" style="left:2313.60px;top:672.70px;transform:rotate(90deg);"><span class="t" style="left:-1.00px;top:-15.66px;font-size:18.5px;color:#232629;letter-spacing:0.400px;">Map</span></div>
<svg style="left:2312.20px;top:636.30px;" width="16.6" height="16.6" viewBox="0 0 24 24"><circle cx="12" cy="12" r="11.1" fill="none" stroke="#2d3136" stroke-width="1.7"/><path d="M1.9 6.6 L4.6 3.9 L9.2 2 L10.5 3.9 L8.1 5.2 L4.4 8.2 L2.5 7.1 Z" fill="#2d3136"/><path d="M4.9 12 Q6.5 11.3 8.1 11.7 L12.4 14.7 L11.9 16.5 L9.2 21.1 L7.6 21.6 L7.05 17.4 L4.9 15.2 Z" fill="#2d3136"/><path d="M15.9 6.05 L20 5.8 L21.6 7.7 L23 8.2 Q23.6 12 22.5 16 L20 19.2 L19.7 14.7 L18.9 12.5 L15.9 12.2 L14.6 10.9 L14.6 9 L16.5 7.7 Z" fill="#2d3136"/></svg>
<div class="r" style="left:2313.60px;top:774.10px;transform:rotate(90deg);"><span class="t" style="left:0.00px;top:-15.66px;font-size:18.5px;color:#232629;letter-spacing:-0.138px;">Captions</span></div>
<svg style="left:2312.20px;top:737.00px;" width="16.6" height="16.6" viewBox="0 0 16 16"><path d="M1.6 2.4 H10.5 L14.4 6.2 V15.4 H1.6 Z" fill="none" stroke="#2d3136" stroke-width="1.2"/><path d="M0.5 0.5 L4 0.5 L0.5 4 Z" fill="#2d3136"/><path d="M4 7 H12 M4 9.7 H12 M4 12.4 H12" stroke="#2d3136" stroke-width="1.1"/></svg>
<div class="r" style="left:2313.60px;top:911.10px;transform:rotate(90deg);"><span class="t" style="left:0.00px;top:-15.66px;font-size:18.5px;color:#232629;letter-spacing:-0.015px;">Versions</span></div>
<svg style="left:2312.20px;top:875.40px;" width="16.6" height="16.6" viewBox="0 0 16 16"><rect x="0.6" y="0.6" width="7.5" height="14.8" fill="none" stroke="#2d3136" stroke-width="1.2"/><path d="M2.3 3.4 H6.4 M2.3 6 H6.4 M2.3 8.6 H6.4 M2.3 11.2 H6.4" stroke="#2d3136" stroke-width="1.1"/><path d="M9 0.6 H15.4 V4" fill="none" stroke="#2d3136" stroke-width="1.2"/><rect x="7.2" y="5.8" width="8.8" height="9.7" fill="#2d3136"/><path d="M8.6 13.8 L11.5 10 L13 11.6 L14.6 9.4 V13.8 Z" fill="#eff0f1"/></svg>
<div class="r" style="left:2313.60px;top:1046.50px;transform:rotate(90deg);"><span class="t" style="left:-1.00px;top:-15.66px;font-size:18.5px;color:#232629;letter-spacing:-0.018px;">Filters</span></div>
<svg style="left:2312.20px;top:1010.20px;" width="16.6" height="16.6" viewBox="0 0 16 16"><path d="M0.8 1 H15.2 L9.6 8.4 V15 L6.4 12.4 V8.4 Z" fill="none" stroke="#2d3136" stroke-width="1.2" stroke-linejoin="round"/></svg>
<div class="r" style="left:2313.60px;top:1160.40px;transform:rotate(90deg);"><span class="t" style="left:0.00px;top:-15.66px;font-size:18.5px;color:#232629;letter-spacing:0.066px;">Tools</span></div>
<svg style="left:2312.20px;top:1125.30px;" width="16.6" height="16.6" viewBox="0 0 16 16"><path d="M0.7 15.3 L0.9 11.8 L10.6 2.1 L13.9 5.4 L4.2 15.1 Z" fill="none" stroke="#2d3136" stroke-width="1.2"/><path d="M9.4 3.2 L12 0.6 L15.4 4 L12.8 6.6 Z" fill="#2d3136"/></svg>
</div>
<div class="g" id="statusbar">
<div style="left:65.00px;top:1316.90px;width:2283.00px;height:1.90px;background:#c6c8c9;"></div>
<div style="left:65.00px;top:1318.20px;width:2283.00px;height:54.80px;background:#eff0f1;"></div>
<span class="t" style="left:68.60px;top:1337.00px;font-size:18.5px;color:#232629;letter-spacing:-0.204px;">2022.06.13-Alaska Day 3-_MG_6292.jpg (4 of 9)</span>
<span class="t" style="left:1015.40px;top:1337.00px;font-size:18.5px;color:#232629;letter-spacing:0.364px;">No active filter</span>
<span class="t" style="left:1653.40px;top:1337.00px;font-size:18.5px;color:#232629;letter-spacing:0.064px;">No active process</span>
<svg style="left:1523.80px;top:1337.30px;" width="14" height="17.2" viewBox="0 0 14 17.2"><path d="M0 3 H14 M4.5 3 V0.6 H9.5 V3 M1.8 3 V16.6 H12.2 V3" fill="none" stroke="#c3c5c6" stroke-width="1.1"/></svg>
<svg style="left:1574.30px;top:1338.00px;" width="16" height="16" viewBox="0 0 16 16"><path d="M0.8 1 H15.2 L9.6 8.4 V15 L6.4 12.4 V8.4 Z" fill="none" stroke="#232629" stroke-width="1.2" stroke-linejoin="round"/></svg>
<svg style="left:1865.10px;top:1336.30px;" width="19.5" height="19.5" viewBox="0 0 19.5 19.5"><circle cx="8.3" cy="8.3" r="7.4" fill="none" stroke="#232629" stroke-width="1.5"/><path d="M13.6 13.6 L18.8 18.8" stroke="#232629" stroke-width="2.2"/><rect x="4.9" y="4.9" width="6.8" height="6.8" fill="none" stroke="#232629" stroke-width="1.2"/></svg>
<svg style="left:1907.50px;top:1336.30px;" width="19.5" height="19.5" viewBox="0 0 19.5 19.5"><path d="M3.6 3.8 A7.4 7.4 0 1 1 2 11" fill="none" stroke="#b9bbbc" stroke-width="1.4"/><path d="M3.2 0.5 V4.6 H7.4" fill="none" stroke="#b9bbbc" stroke-width="1.4"/><path d="M13.6 13.6 L18.8 18.8" stroke="#b9bbbc" stroke-width="2"/></svg>
<svg style="left:1949.50px;top:1336.30px;" width="19.5" height="19.5" viewBox="0 0 19.5 19.5"><circle cx="8.3" cy="8.3" r="7.4" fill="none" stroke="#232629" stroke-width="1.5"/><path d="M13.6 13.6 L18.8 18.8" stroke="#232629" stroke-width="2.2"/><path d="M4.6 8.3 H12" stroke="#232629" stroke-width="1.9"/></svg>
<div style="left:1979.40px;top:1341.10px;width:179.00px;height:9.00px;background:#d3d5d6;border-radius:5px;box-shadow:inset 0 0 0 1px #c6c8c9;"></div>
<div style="left:1979.40px;top:1341.10px;width:56.00px;height:9.00px;background:#4a4b4b;border-radius:5px;"></div>
<div style="left:2021.50px;top:1332.60px;width:26.20px;height:26.20px;background:#f4f5f5;border:1.5px solid #c6c8c9;border-radius:50%;box-sizing:border-box;box-shadow:0 1px 1px rgba(0,0,0,.15);"></div>
<svg style="left:2171.40px;top:1336.30px;" width="19.5" height="19.5" viewBox="0 0 19.5 19.5"><circle cx="8.3" cy="8.3" r="7.4" fill="none" stroke="#232629" stroke-width="1.5"/><path d="M13.6 13.6 L18.8 18.8" stroke="#232629" stroke-width="2.2"/><path d="M4.6 8.3 H12 M8.3 4.6 V12" stroke="#232629" stroke-width="1.9"/></svg>
<div style="left:2201.80px;top:1322.20px;width:115.80px;height:47.20px;background:#f0f1f2;border:1.4px solid #d6d7d8;border-radius:6px;box-sizing:border-box;"></div>
<span class="t" style="left:2213.60px;top:1338.00px;font-size:18.5px;color:#b4b6b7;letter-spacing:-1.089px;-webkit-text-stroke-width:0.1px;">10%</span>
<svg style="left:2291.90px;top:1342.30px;" width="15.9" height="9.5" viewBox="0 0 16 10"><path d="M0.5 1.3 L8 8.8 L15.5 1.3" fill="none" stroke="#b7b9ba" stroke-width="1.4"/></svg>
</div>
</div>
</body></html>
